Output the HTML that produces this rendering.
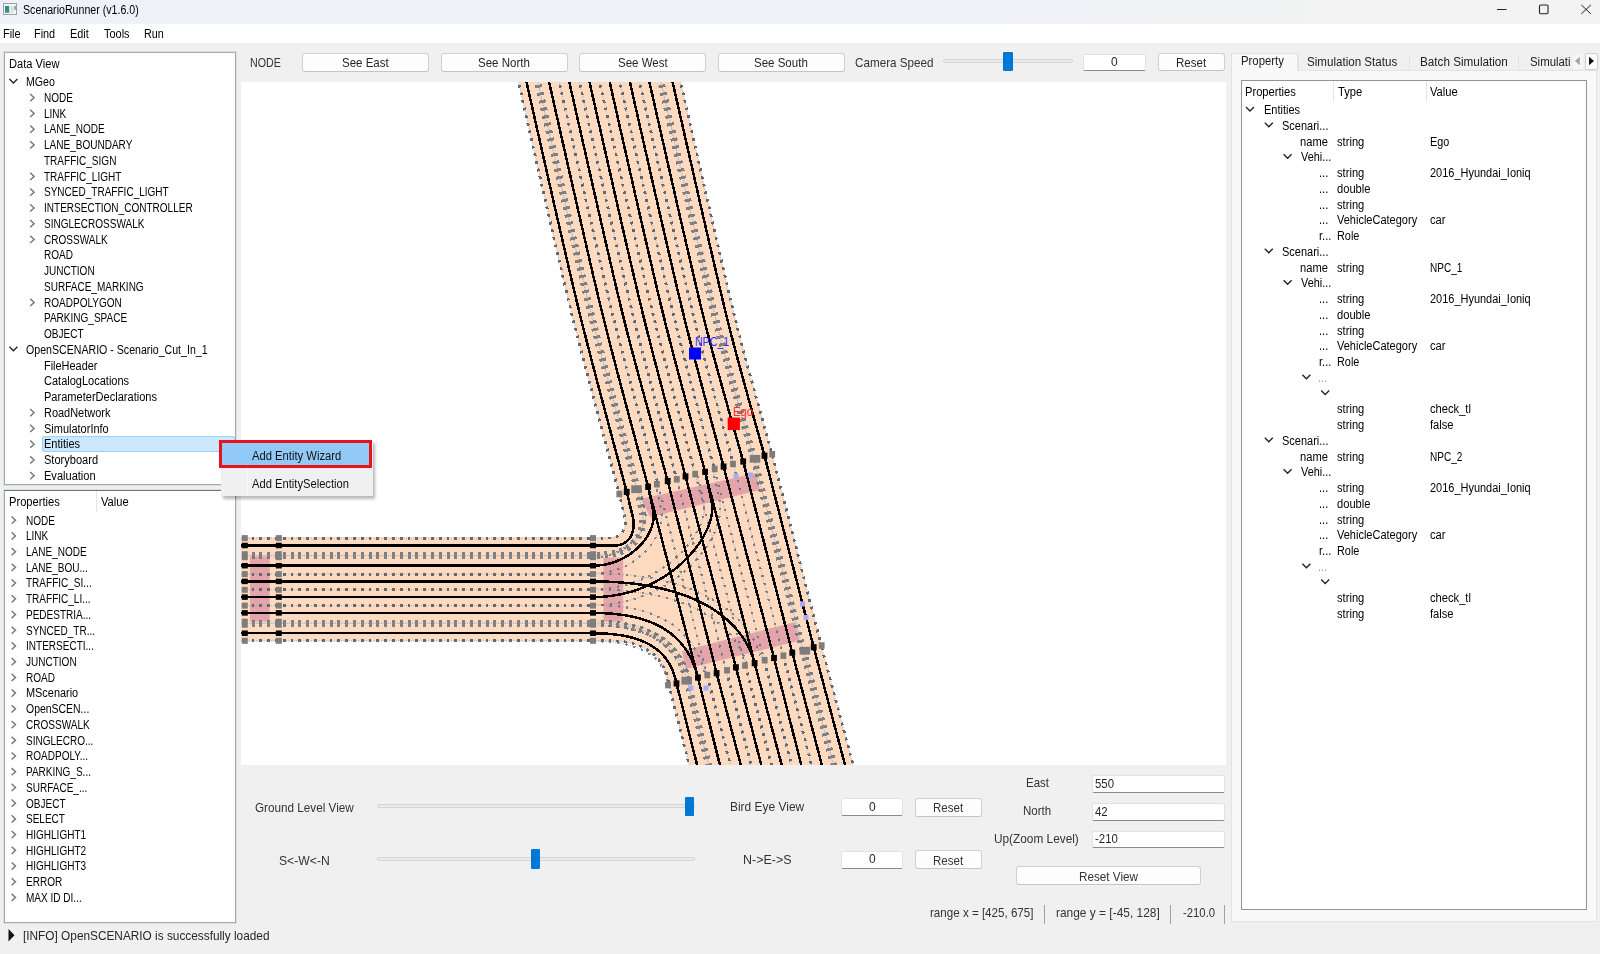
<!DOCTYPE html>
<html><head><meta charset="utf-8"><style>
html,body{margin:0;padding:0;width:1600px;height:954px;overflow:hidden;background:#f0f0f0;position:relative}
.t{position:absolute;white-space:pre;line-height:1;font-family:"Liberation Sans",sans-serif;transform-origin:0 0}
</style></head><body>
<div style="position:absolute;left:0px;top:0px;width:1600px;height:24px;background:linear-gradient(90deg,#eef1f7 0%,#eef1f8 60%,#f1f2f4 74%,#f3f3f3 85%,#f3f3f3 100%)"></div><svg style="position:absolute;left:0;top:0" width="24" height="20">
<rect x="3.5" y="3.5" width="13" height="11" fill="#f4f5f6" stroke="#9aa0a6" stroke-width="1"/>
<defs><linearGradient id="ig" x1="0" y1="0" x2="1" y2="1"><stop offset="0" stop-color="#3f6fb0"/><stop offset="1" stop-color="#3aaa5a"/></linearGradient></defs>
<rect x="5" y="6" width="4.3" height="6.8" fill="url(#ig)"/>
<rect x="10.8" y="6" width="2.6" height="6.8" fill="#dcdcdc"/>
<rect x="14" y="6" width="2" height="3.8" fill="#7ab6a0"/>
</svg><svg style="position:absolute;left:1480px;top:0" width="120" height="24">
<line x1="17" y1="9.5" x2="26.5" y2="9.5" stroke="#222" stroke-width="1"/>
<rect x="59.5" y="5" width="8.5" height="8.7" rx="1.2" fill="none" stroke="#222" stroke-width="1.1"/>
<path d="M101.3 4.9 L110.9 13.9 M110.9 4.9 L101.3 13.9" stroke="#222" stroke-width="1"/>
</svg><div style="position:absolute;left:0px;top:24px;width:1600px;height:19px;background:#ffffff"></div><div style="position:absolute;left:4px;top:52px;width:232px;height:433px;background:#fff;border:1px solid #a7aab0;box-sizing:border-box;box-shadow:0 0 0 1px #dcdde0"></div><div style="position:absolute;left:41.8px;top:435.65px;width:193px;height:16px;background:#cce8ff;border:1px solid #99d1ff;border-radius:2px;box-sizing:border-box"></div><div style="position:absolute;left:4px;top:490px;width:232px;height:433px;background:#fff;border:1px solid #a7aab0;border-top-color:#6d7580;box-sizing:border-box;box-shadow:0 0 0 1px #dcdde0"></div><div style="position:absolute;left:96px;top:491px;width:1px;height:20.5px;background:#e6e6e6"></div><svg style="position:absolute;left:0;top:920" width="20" height="30"><path d="M8.5 9 L14.5 15.3 L8.5 21.6 Z" fill="#111"/></svg><div style="position:absolute;left:302px;top:53.4px;width:127px;height:18.2px;background:#fdfdfd;border:1px solid #d0d0d0;border-bottom-color:#c4c4c4;border-radius:3px;box-sizing:border-box"></div><div style="position:absolute;left:440.5px;top:53.4px;width:127px;height:18.2px;background:#fdfdfd;border:1px solid #d0d0d0;border-bottom-color:#c4c4c4;border-radius:3px;box-sizing:border-box"></div><div style="position:absolute;left:579px;top:53.4px;width:127px;height:18.2px;background:#fdfdfd;border:1px solid #d0d0d0;border-bottom-color:#c4c4c4;border-radius:3px;box-sizing:border-box"></div><div style="position:absolute;left:717.5px;top:53.4px;width:127px;height:18.2px;background:#fdfdfd;border:1px solid #d0d0d0;border-bottom-color:#c4c4c4;border-radius:3px;box-sizing:border-box"></div><div style="position:absolute;left:943px;top:59.2px;width:130px;height:4px;background:#e7eaea;border:1px solid #d6d6d6;border-radius:2px;box-sizing:border-box"></div><div style="position:absolute;left:1003.3px;top:51.8px;width:9.5px;height:19px;background:#0078d7;border-radius:1px"></div><div style="position:absolute;left:1083px;top:53.8px;width:63px;height:17px;background:#fff;border:1px solid #e2e2e2;border-bottom:1.5px solid #8a8a8a;border-radius:2px;box-sizing:border-box"></div><div style="position:absolute;left:1157.7px;top:53.4px;width:67px;height:18px;background:#fdfdfd;border:1px solid #d0d0d0;border-bottom-color:#c4c4c4;border-radius:3px;box-sizing:border-box"></div><div style="position:absolute;left:241px;top:81.5px;width:985px;height:683.5px;background:#fff"></div><svg style="position:absolute;left:241px;top:81.5px" width="985" height="683.5" viewBox="0 0 985 683.5">
<defs><clipPath id="mc"><rect x="0" y="0" width="985" height="683.5"/></clipPath></defs><g clip-path="url(#mc)">
<rect x="0" y="0" width="985" height="683.5" fill="#fff"/>
<path d="M275.30 -9.50 L275.32 -9.42 L275.25 -9.74 L275.11 -10.36 L274.93 -11.17 L274.72 -12.08 L274.52 -12.99 L274.34 -13.78 L274.21 -14.38 L274.14 -14.66 L274.18 -14.53 L274.32 -13.89 L274.61 -12.64 L275.06 -10.68 L275.69 -7.90 L276.53 -4.21 L277.60 0.50 L278.94 6.42 L280.56 13.56 L282.42 21.79 L284.49 30.95 L286.74 40.89 L289.12 51.46 L291.62 62.50 L294.19 73.88 L296.81 85.42 L299.43 96.99 L302.03 108.44 L304.57 119.61 L307.03 130.35 L309.35 140.51 L311.52 149.95 L313.50 158.50 L315.30 166.25 L316.96 173.42 L318.51 180.11 L319.96 186.37 L321.34 192.31 L322.66 197.99 L323.95 203.50 L325.23 208.91 L326.52 214.31 L327.84 219.78 L329.20 225.40 L330.64 231.25 L332.17 237.40 L333.81 243.94 L335.58 250.94 L337.50 258.50 L339.64 266.83 L342.02 276.00 L344.61 285.87 L347.35 296.28 L350.22 307.10 L353.16 318.16 L356.13 329.33 L359.10 340.45 L362.02 351.37 L364.86 361.96 L367.56 372.04 L370.10 381.49 L372.42 390.15 L374.49 397.87 L376.26 404.50 L377.70 409.90 L427.50 601.40 L448.00 682.50 L449.52 688.50 L613.50 688.50 L611.90 682.50 L580.70 565.20 L531.50 373.70 L530.37 369.64 L529.00 364.71 L527.40 359.01 L525.61 352.64 L523.66 345.70 L521.58 338.27 L519.39 330.46 L517.12 322.35 L514.81 314.05 L512.48 305.65 L510.17 297.24 L507.89 288.93 L505.68 280.80 L503.56 272.96 L501.58 265.49 L499.75 258.50 L498.06 251.94 L496.46 245.67 L494.94 239.64 L493.49 233.79 L492.08 228.07 L490.71 222.44 L489.36 216.82 L488.02 211.18 L486.67 205.45 L485.29 199.58 L483.88 193.52 L482.42 187.22 L480.89 180.62 L479.27 173.67 L477.57 166.32 L475.75 158.50 L473.77 149.95 L471.59 140.51 L469.25 130.35 L466.79 119.61 L464.24 108.44 L461.63 96.99 L459.00 85.42 L456.37 73.88 L453.78 62.50 L451.28 51.46 L448.88 40.89 L446.62 30.95 L444.54 21.79 L442.67 13.56 L441.05 6.42 L439.70 0.50 L438.63 -4.21 L437.78 -7.90 L437.15 -10.68 L436.70 -12.64 L436.41 -13.89 L436.26 -14.53 L436.23 -14.66 L436.30 -14.38 L436.43 -13.78 L436.61 -12.99 L436.82 -12.08 L437.02 -11.17 L437.21 -10.36 L437.35 -9.74 L437.42 -9.42 L437.40 -9.50 Z" fill="#fddac0"/>
<rect x="-5" y="455.29999999999995" width="424" height="104.0" fill="#fddac0"/>
<path d="M377.70 409.90 L383.50 433.50 L383.78 434.87 L384.01 436.24 L384.17 437.59 L384.26 438.93 L384.28 440.25 L384.23 441.55 L384.10 442.81 L383.89 444.04 L383.60 445.23 L383.22 446.38 L382.75 447.48 L382.19 448.52 L381.53 449.51 L380.77 450.44 L379.91 451.30 L378.94 452.09 L377.87 452.81 L376.68 453.44 L375.38 453.99 L373.95 454.45 L372.41 454.81 L370.73 455.08 L368.93 455.24 L367.00 455.30 L359.00 455.30 L359.00 478.50 L419.00 478.50 Z" fill="#fddac0"/>
<path d="M371.00 559.30 L375.41 559.42 L379.65 559.74 L383.70 560.23 L387.59 560.91 L391.29 561.77 L394.82 562.80 L398.17 563.99 L401.35 565.35 L404.35 566.86 L407.18 568.52 L409.83 570.33 L412.31 572.29 L414.62 574.38 L416.75 576.60 L418.70 578.95 L420.48 581.42 L422.09 584.01 L423.52 586.71 L424.78 589.52 L425.87 592.43 L426.79 595.44 L427.53 598.54 L428.10 601.73 L428.50 605.00 L435.00 630.50 L459.00 630.50 L459.00 538.50 L371.00 538.50 Z" fill="#fddac0"/>
<path d="M400.00 417.00 L515.50 391.00 L519.00 408.00 L409.00 435.00 Z" fill="#e4a4aa"/>
<path d="M441.00 569.10 L554.00 539.90 L558.50 558.80 L444.50 587.00 Z" fill="#e4a4aa"/>
<rect x="9" y="474.5" width="19.7" height="65" fill="#e4a4aa"/>
<rect x="362.4" y="475.5" width="19.7" height="64" fill="#e4a4aa"/>
<path d="M275.30 -9.50 L275.32 -9.42 L275.25 -9.74 L275.11 -10.36 L274.93 -11.17 L274.72 -12.08 L274.52 -12.99 L274.34 -13.78 L274.21 -14.38 L274.14 -14.66 L274.18 -14.53 L274.32 -13.89 L274.61 -12.64 L275.06 -10.68 L275.69 -7.90 L276.53 -4.21 L277.60 0.50 L278.94 6.42 L280.56 13.56 L282.42 21.79 L284.49 30.95 L286.74 40.89 L289.12 51.46 L291.62 62.50 L294.19 73.88 L296.81 85.42 L299.43 96.99 L302.03 108.44 L304.57 119.61 L307.03 130.35 L309.35 140.51 L311.52 149.95 L313.50 158.50 L315.30 166.25 L316.96 173.42 L318.51 180.11 L319.96 186.37 L321.34 192.31 L322.66 197.99 L323.95 203.50 L325.23 208.91 L326.52 214.31 L327.84 219.78 L329.20 225.40 L330.64 231.25 L332.17 237.40 L333.81 243.94 L335.58 250.94 L337.50 258.50 L339.64 266.83 L342.02 276.00 L344.61 285.87 L347.35 296.28 L350.22 307.10 L353.16 318.16 L356.13 329.33 L359.10 340.45 L362.02 351.37 L364.86 361.96 L367.56 372.04 L370.10 381.49 L372.42 390.15 L374.49 397.87 L376.26 404.50 L377.70 409.90" fill="none" stroke="#9aa0a6" stroke-width="0.8" stroke-dasharray="1 1.5"/>
<path d="M275.30 -9.50 L275.32 -9.42 L275.25 -9.74 L275.11 -10.36 L274.93 -11.17 L274.72 -12.08 L274.52 -12.99 L274.34 -13.78 L274.21 -14.38 L274.14 -14.66 L274.18 -14.53 L274.32 -13.89 L274.61 -12.64 L275.06 -10.68 L275.69 -7.90 L276.53 -4.21 L277.60 0.50 L278.94 6.42 L280.56 13.56 L282.42 21.79 L284.49 30.95 L286.74 40.89 L289.12 51.46 L291.62 62.50 L294.19 73.88 L296.81 85.42 L299.43 96.99 L302.03 108.44 L304.57 119.61 L307.03 130.35 L309.35 140.51 L311.52 149.95 L313.50 158.50 L315.30 166.25 L316.96 173.42 L318.51 180.11 L319.96 186.37 L321.34 192.31 L322.66 197.99 L323.95 203.50 L325.23 208.91 L326.52 214.31 L327.84 219.78 L329.20 225.40 L330.64 231.25 L332.17 237.40 L333.81 243.94 L335.58 250.94 L337.50 258.50 L339.64 266.83 L342.02 276.00 L344.61 285.87 L347.35 296.28 L350.22 307.10 L353.16 318.16 L356.13 329.33 L359.10 340.45 L362.02 351.37 L364.86 361.96 L367.56 372.04 L370.10 381.49 L372.42 390.15 L374.49 397.87 L376.26 404.50 L377.70 409.90" fill="none" stroke="#5d6a76" stroke-width="2.8" stroke-dasharray="2.8 5" opacity="1.0" shape-rendering="crispEdges"/>
<path d="M437.40 -9.50 L437.42 -9.42 L437.35 -9.74 L437.21 -10.36 L437.02 -11.17 L436.82 -12.08 L436.61 -12.99 L436.43 -13.78 L436.30 -14.38 L436.23 -14.66 L436.26 -14.53 L436.41 -13.89 L436.70 -12.64 L437.15 -10.68 L437.78 -7.90 L438.63 -4.21 L439.70 0.50 L441.05 6.42 L442.67 13.56 L444.54 21.79 L446.62 30.95 L448.88 40.89 L451.28 51.46 L453.78 62.50 L456.37 73.88 L459.00 85.42 L461.63 96.99 L464.24 108.44 L466.79 119.61 L469.25 130.35 L471.59 140.51 L473.77 149.95 L475.75 158.50 L477.57 166.32 L479.27 173.67 L480.89 180.62 L482.42 187.22 L483.88 193.52 L485.29 199.58 L486.67 205.45 L488.02 211.18 L489.36 216.82 L490.71 222.44 L492.08 228.07 L493.49 233.79 L494.94 239.64 L496.46 245.67 L498.06 251.94 L499.75 258.50 L501.58 265.49 L503.56 272.96 L505.68 280.80 L507.89 288.93 L510.17 297.24 L512.48 305.65 L514.81 314.05 L517.12 322.35 L519.39 330.46 L521.58 338.27 L523.66 345.70 L525.61 352.64 L527.40 359.01 L529.00 364.71 L530.37 369.64 L531.50 373.70" fill="none" stroke="#9aa0a6" stroke-width="0.8" stroke-dasharray="1 1.5"/>
<path d="M437.40 -9.50 L437.42 -9.42 L437.35 -9.74 L437.21 -10.36 L437.02 -11.17 L436.82 -12.08 L436.61 -12.99 L436.43 -13.78 L436.30 -14.38 L436.23 -14.66 L436.26 -14.53 L436.41 -13.89 L436.70 -12.64 L437.15 -10.68 L437.78 -7.90 L438.63 -4.21 L439.70 0.50 L441.05 6.42 L442.67 13.56 L444.54 21.79 L446.62 30.95 L448.88 40.89 L451.28 51.46 L453.78 62.50 L456.37 73.88 L459.00 85.42 L461.63 96.99 L464.24 108.44 L466.79 119.61 L469.25 130.35 L471.59 140.51 L473.77 149.95 L475.75 158.50 L477.57 166.32 L479.27 173.67 L480.89 180.62 L482.42 187.22 L483.88 193.52 L485.29 199.58 L486.67 205.45 L488.02 211.18 L489.36 216.82 L490.71 222.44 L492.08 228.07 L493.49 233.79 L494.94 239.64 L496.46 245.67 L498.06 251.94 L499.75 258.50 L501.58 265.49 L503.56 272.96 L505.68 280.80 L507.89 288.93 L510.17 297.24 L512.48 305.65 L514.81 314.05 L517.12 322.35 L519.39 330.46 L521.58 338.27 L523.66 345.70 L525.61 352.64 L527.40 359.01 L529.00 364.71 L530.37 369.64 L531.50 373.70" fill="none" stroke="#5d6a76" stroke-width="2.8" stroke-dasharray="2.8 5" opacity="1.0" shape-rendering="crispEdges"/>
<path d="M316.00 -9.50 L316.02 -9.42 L315.95 -9.74 L315.81 -10.36 L315.62 -11.17 L315.42 -12.08 L315.22 -12.99 L315.04 -13.78 L314.90 -14.38 L314.84 -14.66 L314.87 -14.53 L315.02 -13.89 L315.31 -12.64 L315.75 -10.68 L316.39 -7.90 L317.23 -4.21 L318.30 0.50 L319.64 6.42 L321.26 13.56 L323.13 21.79 L325.20 30.95 L327.45 40.89 L329.84 51.46 L332.34 62.50 L334.91 73.88 L337.53 85.42 L340.15 96.99 L342.76 108.44 L345.30 119.61 L347.75 130.35 L350.08 140.51 L352.25 149.95 L354.23 158.50 L356.03 166.26 L357.70 173.48 L359.26 180.22 L360.73 186.56 L362.12 192.58 L363.46 198.34 L364.77 203.93 L366.06 209.41 L367.36 214.87 L368.68 220.37 L370.05 225.99 L371.48 231.81 L373.00 237.89 L374.61 244.32 L376.35 251.16 L378.23 258.50 L380.32 266.53 L382.63 275.33 L385.13 284.75 L387.78 294.66 L390.53 304.92 L393.36 315.40 L396.22 325.95 L399.07 336.45 L401.87 346.75 L404.59 356.72 L407.18 366.22 L409.61 375.12 L411.83 383.27 L413.82 390.54 L415.52 396.80 L416.90 401.90" fill="none" stroke="#9aa0a6" stroke-width="0.8" stroke-dasharray="1 1.5"/>
<path d="M316.00 -9.50 L316.02 -9.42 L315.95 -9.74 L315.81 -10.36 L315.62 -11.17 L315.42 -12.08 L315.22 -12.99 L315.04 -13.78 L314.90 -14.38 L314.84 -14.66 L314.87 -14.53 L315.02 -13.89 L315.31 -12.64 L315.75 -10.68 L316.39 -7.90 L317.23 -4.21 L318.30 0.50 L319.64 6.42 L321.26 13.56 L323.13 21.79 L325.20 30.95 L327.45 40.89 L329.84 51.46 L332.34 62.50 L334.91 73.88 L337.53 85.42 L340.15 96.99 L342.76 108.44 L345.30 119.61 L347.75 130.35 L350.08 140.51 L352.25 149.95 L354.23 158.50 L356.03 166.26 L357.70 173.48 L359.26 180.22 L360.73 186.56 L362.12 192.58 L363.46 198.34 L364.77 203.93 L366.06 209.41 L367.36 214.87 L368.68 220.37 L370.05 225.99 L371.48 231.81 L373.00 237.89 L374.61 244.32 L376.35 251.16 L378.23 258.50 L380.32 266.53 L382.63 275.33 L385.13 284.75 L387.78 294.66 L390.53 304.92 L393.36 315.40 L396.22 325.95 L399.07 336.45 L401.87 346.75 L404.59 356.72 L407.18 366.22 L409.61 375.12 L411.83 383.27 L413.82 390.54 L415.52 396.80 L416.90 401.90" fill="none" stroke="#5d6a76" stroke-width="2.8" stroke-dasharray="2.8 5" opacity="1.0" shape-rendering="crispEdges"/>
<path d="M336.20 -9.50 L336.22 -9.42 L336.15 -9.74 L336.01 -10.36 L335.82 -11.17 L335.62 -12.08 L335.42 -12.99 L335.24 -13.78 L335.10 -14.38 L335.04 -14.66 L335.07 -14.53 L335.22 -13.89 L335.50 -12.64 L335.95 -10.68 L336.59 -7.90 L337.43 -4.21 L338.50 0.50 L339.84 6.42 L341.47 13.56 L343.33 21.79 L345.40 30.95 L347.65 40.89 L350.04 51.46 L352.54 62.50 L355.12 73.88 L357.74 85.42 L360.37 96.99 L362.97 108.44 L365.52 119.61 L367.97 130.35 L370.30 140.51 L372.47 149.95 L374.45 158.50 L376.26 166.27 L377.94 173.51 L379.51 180.29 L380.99 186.68 L382.40 192.75 L383.75 198.57 L385.07 204.21 L386.38 209.74 L387.69 215.23 L389.02 220.75 L390.38 226.38 L391.81 232.17 L393.31 238.21 L394.91 244.57 L396.62 251.31 L398.45 258.50 L400.48 266.34 L402.72 274.89 L405.14 284.02 L407.69 293.60 L410.34 303.51 L413.05 313.60 L415.80 323.76 L418.53 333.85 L421.21 343.75 L423.81 353.32 L426.29 362.44 L428.62 370.97 L430.75 378.80 L432.64 385.78 L434.27 391.79 L435.60 396.70" fill="none" stroke="#9aa0a6" stroke-width="0.8" stroke-dasharray="1 1.5"/>
<path d="M336.20 -9.50 L336.22 -9.42 L336.15 -9.74 L336.01 -10.36 L335.82 -11.17 L335.62 -12.08 L335.42 -12.99 L335.24 -13.78 L335.10 -14.38 L335.04 -14.66 L335.07 -14.53 L335.22 -13.89 L335.50 -12.64 L335.95 -10.68 L336.59 -7.90 L337.43 -4.21 L338.50 0.50 L339.84 6.42 L341.47 13.56 L343.33 21.79 L345.40 30.95 L347.65 40.89 L350.04 51.46 L352.54 62.50 L355.12 73.88 L357.74 85.42 L360.37 96.99 L362.97 108.44 L365.52 119.61 L367.97 130.35 L370.30 140.51 L372.47 149.95 L374.45 158.50 L376.26 166.27 L377.94 173.51 L379.51 180.29 L380.99 186.68 L382.40 192.75 L383.75 198.57 L385.07 204.21 L386.38 209.74 L387.69 215.23 L389.02 220.75 L390.38 226.38 L391.81 232.17 L393.31 238.21 L394.91 244.57 L396.62 251.31 L398.45 258.50 L400.48 266.34 L402.72 274.89 L405.14 284.02 L407.69 293.60 L410.34 303.51 L413.05 313.60 L415.80 323.76 L418.53 333.85 L421.21 343.75 L423.81 353.32 L426.29 362.44 L428.62 370.97 L430.75 378.80 L432.64 385.78 L434.27 391.79 L435.60 396.70" fill="none" stroke="#5d6a76" stroke-width="2.8" stroke-dasharray="2.8 5" opacity="1.0" shape-rendering="crispEdges"/>
<path d="M356.40 -9.50 L356.42 -9.42 L356.35 -9.74 L356.21 -10.36 L356.02 -11.17 L355.82 -12.08 L355.61 -12.99 L355.43 -13.78 L355.30 -14.38 L355.24 -14.66 L355.27 -14.53 L355.42 -13.89 L355.70 -12.64 L356.15 -10.68 L356.79 -7.90 L357.63 -4.21 L358.70 0.50 L360.05 6.42 L361.67 13.56 L363.53 21.79 L365.61 30.95 L367.86 40.89 L370.25 51.46 L372.75 62.50 L375.33 73.88 L377.95 85.42 L380.58 96.99 L383.19 108.44 L385.73 119.61 L388.19 130.35 L390.52 140.51 L392.69 149.95 L394.68 158.50 L396.48 166.28 L398.17 173.55 L399.75 180.36 L401.24 186.79 L402.67 192.91 L404.04 198.77 L405.38 204.46 L406.70 210.02 L408.02 215.55 L409.35 221.09 L410.72 226.72 L412.14 232.50 L413.63 238.50 L415.20 244.79 L416.88 251.43 L418.68 258.50 L420.65 266.17 L422.82 274.51 L425.14 283.38 L427.60 292.67 L430.15 302.25 L432.75 312.01 L435.37 321.82 L437.99 331.55 L440.55 341.09 L443.04 350.31 L445.41 359.09 L447.63 367.31 L449.66 374.84 L451.47 381.56 L453.03 387.36 L454.30 392.10" fill="none" stroke="#e8a070" stroke-width="0.8" stroke-dasharray="1 1.5"/>
<path d="M356.40 -9.50 L356.42 -9.42 L356.35 -9.74 L356.21 -10.36 L356.02 -11.17 L355.82 -12.08 L355.61 -12.99 L355.43 -13.78 L355.30 -14.38 L355.24 -14.66 L355.27 -14.53 L355.42 -13.89 L355.70 -12.64 L356.15 -10.68 L356.79 -7.90 L357.63 -4.21 L358.70 0.50 L360.05 6.42 L361.67 13.56 L363.53 21.79 L365.61 30.95 L367.86 40.89 L370.25 51.46 L372.75 62.50 L375.33 73.88 L377.95 85.42 L380.58 96.99 L383.19 108.44 L385.73 119.61 L388.19 130.35 L390.52 140.51 L392.69 149.95 L394.68 158.50 L396.48 166.28 L398.17 173.55 L399.75 180.36 L401.24 186.79 L402.67 192.91 L404.04 198.77 L405.38 204.46 L406.70 210.02 L408.02 215.55 L409.35 221.09 L410.72 226.72 L412.14 232.50 L413.63 238.50 L415.20 244.79 L416.88 251.43 L418.68 258.50 L420.65 266.17 L422.82 274.51 L425.14 283.38 L427.60 292.67 L430.15 302.25 L432.75 312.01 L435.37 321.82 L437.99 331.55 L440.55 341.09 L443.04 350.31 L445.41 359.09 L447.63 367.31 L449.66 374.84 L451.47 381.56 L453.03 387.36 L454.30 392.10" fill="none" stroke="#5d6a76" stroke-width="2.8" stroke-dasharray="2.8 5" opacity="1.0" shape-rendering="crispEdges"/>
<path d="M376.60 -9.50 L376.62 -9.42 L376.55 -9.74 L376.41 -10.36 L376.22 -11.17 L376.02 -12.08 L375.81 -12.99 L375.63 -13.78 L375.50 -14.38 L375.44 -14.66 L375.47 -14.53 L375.62 -13.89 L375.90 -12.64 L376.35 -10.68 L376.98 -7.90 L377.83 -4.21 L378.90 0.50 L380.25 6.42 L381.87 13.56 L383.74 21.79 L385.81 30.95 L388.06 40.89 L390.46 51.46 L392.96 62.50 L395.54 73.88 L398.16 85.42 L400.80 96.99 L403.40 108.44 L405.95 119.61 L408.41 130.35 L410.74 140.51 L412.91 149.95 L414.90 158.50 L416.71 166.29 L418.40 173.58 L419.99 180.43 L421.49 186.91 L422.93 193.07 L424.31 198.99 L425.66 204.72 L426.99 210.33 L428.32 215.89 L429.66 221.45 L431.03 227.08 L432.44 232.84 L433.92 238.80 L435.48 245.02 L437.13 251.57 L438.90 258.50 L440.83 265.99 L442.94 274.09 L445.20 282.69 L447.58 291.67 L450.05 300.92 L452.56 310.32 L455.10 319.75 L457.62 329.10 L460.10 338.26 L462.49 347.10 L464.78 355.52 L466.91 363.40 L468.87 370.62 L470.62 377.07 L472.12 382.64 L473.35 387.20" fill="none" stroke="#9aa0a6" stroke-width="0.8" stroke-dasharray="1 1.5"/>
<path d="M376.60 -9.50 L376.62 -9.42 L376.55 -9.74 L376.41 -10.36 L376.22 -11.17 L376.02 -12.08 L375.81 -12.99 L375.63 -13.78 L375.50 -14.38 L375.44 -14.66 L375.47 -14.53 L375.62 -13.89 L375.90 -12.64 L376.35 -10.68 L376.98 -7.90 L377.83 -4.21 L378.90 0.50 L380.25 6.42 L381.87 13.56 L383.74 21.79 L385.81 30.95 L388.06 40.89 L390.46 51.46 L392.96 62.50 L395.54 73.88 L398.16 85.42 L400.80 96.99 L403.40 108.44 L405.95 119.61 L408.41 130.35 L410.74 140.51 L412.91 149.95 L414.90 158.50 L416.71 166.29 L418.40 173.58 L419.99 180.43 L421.49 186.91 L422.93 193.07 L424.31 198.99 L425.66 204.72 L426.99 210.33 L428.32 215.89 L429.66 221.45 L431.03 227.08 L432.44 232.84 L433.92 238.80 L435.48 245.02 L437.13 251.57 L438.90 258.50 L440.83 265.99 L442.94 274.09 L445.20 282.69 L447.58 291.67 L450.05 300.92 L452.56 310.32 L455.10 319.75 L457.62 329.10 L460.10 338.26 L462.49 347.10 L464.78 355.52 L466.91 363.40 L468.87 370.62 L470.62 377.07 L472.12 382.64 L473.35 387.20" fill="none" stroke="#5d6a76" stroke-width="2.8" stroke-dasharray="2.8 5" opacity="1.0" shape-rendering="crispEdges"/>
<path d="M396.45 -9.50 L396.47 -9.42 L396.40 -9.74 L396.26 -10.36 L396.07 -11.17 L395.87 -12.08 L395.66 -12.99 L395.48 -13.78 L395.35 -14.38 L395.29 -14.66 L395.32 -14.53 L395.46 -13.89 L395.75 -12.64 L396.20 -10.68 L396.83 -7.90 L397.68 -4.21 L398.75 0.50 L400.10 6.42 L401.72 13.56 L403.59 21.79 L405.67 30.95 L407.92 40.89 L410.31 51.46 L412.82 62.50 L415.40 73.88 L418.03 85.42 L420.66 96.99 L423.27 108.44 L425.82 119.61 L428.28 130.35 L430.61 140.51 L432.78 149.95 L434.77 158.50 L436.58 166.30 L438.28 173.61 L439.87 180.50 L441.39 187.03 L442.83 193.24 L444.22 199.21 L445.58 205.00 L446.92 210.65 L448.25 216.24 L449.59 221.82 L450.96 227.46 L452.37 233.20 L453.84 239.12 L455.39 245.27 L457.02 251.71 L458.77 258.50 L460.67 265.80 L462.74 273.66 L464.96 281.97 L467.29 290.63 L469.69 299.52 L472.15 308.54 L474.62 317.57 L477.08 326.52 L479.49 335.28 L481.83 343.73 L484.05 351.77 L486.13 359.30 L488.04 366.19 L489.74 372.36 L491.20 377.68 L492.40 382.05" fill="none" stroke="#9aa0a6" stroke-width="0.8" stroke-dasharray="1 1.5"/>
<path d="M396.45 -9.50 L396.47 -9.42 L396.40 -9.74 L396.26 -10.36 L396.07 -11.17 L395.87 -12.08 L395.66 -12.99 L395.48 -13.78 L395.35 -14.38 L395.29 -14.66 L395.32 -14.53 L395.46 -13.89 L395.75 -12.64 L396.20 -10.68 L396.83 -7.90 L397.68 -4.21 L398.75 0.50 L400.10 6.42 L401.72 13.56 L403.59 21.79 L405.67 30.95 L407.92 40.89 L410.31 51.46 L412.82 62.50 L415.40 73.88 L418.03 85.42 L420.66 96.99 L423.27 108.44 L425.82 119.61 L428.28 130.35 L430.61 140.51 L432.78 149.95 L434.77 158.50 L436.58 166.30 L438.28 173.61 L439.87 180.50 L441.39 187.03 L442.83 193.24 L444.22 199.21 L445.58 205.00 L446.92 210.65 L448.25 216.24 L449.59 221.82 L450.96 227.46 L452.37 233.20 L453.84 239.12 L455.39 245.27 L457.02 251.71 L458.77 258.50 L460.67 265.80 L462.74 273.66 L464.96 281.97 L467.29 290.63 L469.69 299.52 L472.15 308.54 L474.62 317.57 L477.08 326.52 L479.49 335.28 L481.83 343.73 L484.05 351.77 L486.13 359.30 L488.04 366.19 L489.74 372.36 L491.20 377.68 L492.40 382.05" fill="none" stroke="#5d6a76" stroke-width="2.8" stroke-dasharray="2.8 5" opacity="1.0" shape-rendering="crispEdges"/>
<path d="M294.60 -9.50 L294.62 -9.42 L294.55 -9.74 L294.41 -10.36 L294.23 -11.17 L294.02 -12.08 L293.82 -12.99 L293.64 -13.78 L293.51 -14.38 L293.44 -14.66 L293.47 -14.53 L293.62 -13.89 L293.91 -12.64 L294.36 -10.68 L294.99 -7.90 L295.83 -4.21 L296.90 0.50 L298.24 6.42 L299.86 13.56 L301.72 21.79 L303.79 30.95 L306.04 40.89 L308.43 51.46 L310.93 62.50 L313.50 73.88 L316.12 85.42 L318.74 96.99 L321.34 108.44 L323.88 119.61 L326.34 130.35 L328.66 140.51 L330.83 149.95 L332.81 158.50 L334.61 166.25 L336.28 173.44 L337.83 180.14 L339.28 186.43 L340.67 192.39 L342.00 198.10 L343.30 203.63 L344.58 209.07 L345.87 214.49 L347.19 219.97 L348.56 225.59 L349.99 231.42 L351.52 237.56 L353.15 244.06 L354.91 251.01 L356.81 258.50 L358.93 266.73 L361.28 275.79 L363.84 285.51 L366.54 295.77 L369.36 306.40 L372.26 317.28 L375.18 328.25 L378.11 339.17 L380.98 349.90 L383.77 360.29 L386.43 370.19 L388.92 379.46 L391.20 387.96 L393.24 395.53 L394.98 402.05 L396.40 407.35" fill="none" stroke="#6a7681" stroke-width="7" stroke-dasharray="3 4.8" opacity="0.9" shape-rendering="crispEdges"/>
<path d="M294.60 -9.50 L294.62 -9.42 L294.55 -9.74 L294.41 -10.36 L294.23 -11.17 L294.02 -12.08 L293.82 -12.99 L293.64 -13.78 L293.51 -14.38 L293.44 -14.66 L293.47 -14.53 L293.62 -13.89 L293.91 -12.64 L294.36 -10.68 L294.99 -7.90 L295.83 -4.21 L296.90 0.50 L298.24 6.42 L299.86 13.56 L301.72 21.79 L303.79 30.95 L306.04 40.89 L308.43 51.46 L310.93 62.50 L313.50 73.88 L316.12 85.42 L318.74 96.99 L321.34 108.44 L323.88 119.61 L326.34 130.35 L328.66 140.51 L330.83 149.95 L332.81 158.50 L334.61 166.25 L336.28 173.44 L337.83 180.14 L339.28 186.43 L340.67 192.39 L342.00 198.10 L343.30 203.63 L344.58 209.07 L345.87 214.49 L347.19 219.97 L348.56 225.59 L349.99 231.42 L351.52 237.56 L353.15 244.06 L354.91 251.01 L356.81 258.50 L358.93 266.73 L361.28 275.79 L363.84 285.51 L366.54 295.77 L369.36 306.40 L372.26 317.28 L375.18 328.25 L378.11 339.17 L380.98 349.90 L383.77 360.29 L386.43 370.19 L388.92 379.46 L391.20 387.96 L393.24 395.53 L394.98 402.05 L396.40 407.35" fill="none" stroke="#8a9096" stroke-width="0.9" stroke-dasharray="1 1.2"/>
<path d="M417.80 -9.50 L417.82 -9.42 L417.75 -9.74 L417.61 -10.36 L417.42 -11.17 L417.22 -12.08 L417.01 -12.99 L416.83 -13.78 L416.70 -14.38 L416.63 -14.66 L416.67 -14.53 L416.81 -13.89 L417.10 -12.64 L417.55 -10.68 L418.18 -7.90 L419.03 -4.21 L420.10 0.50 L421.45 6.42 L423.07 13.56 L424.94 21.79 L427.02 30.95 L429.27 40.89 L431.67 51.46 L434.18 62.50 L436.76 73.88 L439.39 85.42 L442.02 96.99 L444.63 108.44 L447.18 119.61 L449.64 130.35 L451.98 140.51 L454.15 149.95 L456.14 158.50 L457.95 166.31 L459.65 173.65 L461.26 180.58 L462.78 187.15 L464.23 193.43 L465.64 199.45 L467.00 205.29 L468.35 210.99 L469.68 216.62 L471.03 222.22 L472.40 227.86 L473.81 233.59 L475.27 239.46 L476.80 245.53 L478.42 251.86 L480.14 258.50 L482.00 265.60 L484.03 273.20 L486.20 281.21 L488.47 289.52 L490.82 298.03 L493.20 306.65 L495.61 315.27 L497.99 323.80 L500.33 332.13 L502.60 340.17 L504.75 347.81 L506.77 354.95 L508.62 361.51 L510.27 367.37 L511.69 372.43 L512.85 376.60" fill="none" stroke="#6a7681" stroke-width="7" stroke-dasharray="3 4.8" opacity="0.9" shape-rendering="crispEdges"/>
<path d="M417.80 -9.50 L417.82 -9.42 L417.75 -9.74 L417.61 -10.36 L417.42 -11.17 L417.22 -12.08 L417.01 -12.99 L416.83 -13.78 L416.70 -14.38 L416.63 -14.66 L416.67 -14.53 L416.81 -13.89 L417.10 -12.64 L417.55 -10.68 L418.18 -7.90 L419.03 -4.21 L420.10 0.50 L421.45 6.42 L423.07 13.56 L424.94 21.79 L427.02 30.95 L429.27 40.89 L431.67 51.46 L434.18 62.50 L436.76 73.88 L439.39 85.42 L442.02 96.99 L444.63 108.44 L447.18 119.61 L449.64 130.35 L451.98 140.51 L454.15 149.95 L456.14 158.50 L457.95 166.31 L459.65 173.65 L461.26 180.58 L462.78 187.15 L464.23 193.43 L465.64 199.45 L467.00 205.29 L468.35 210.99 L469.68 216.62 L471.03 222.22 L472.40 227.86 L473.81 233.59 L475.27 239.46 L476.80 245.53 L478.42 251.86 L480.14 258.50 L482.00 265.60 L484.03 273.20 L486.20 281.21 L488.47 289.52 L490.82 298.03 L493.20 306.65 L495.61 315.27 L497.99 323.80 L500.33 332.13 L502.60 340.17 L504.75 347.81 L506.77 354.95 L508.62 361.51 L510.27 367.37 L511.69 372.43 L512.85 376.60" fill="none" stroke="#8a9096" stroke-width="0.9" stroke-dasharray="1 1.2"/>
<path d="M427.50 601.40 L448.00 682.50 L449.52 688.50" fill="none" stroke="#9aa0a6" stroke-width="0.8" stroke-dasharray="1 1.5"/>
<path d="M427.50 601.40 L448.00 682.50 L449.52 688.50" fill="none" stroke="#5d6a76" stroke-width="2.8" stroke-dasharray="2.8 5" opacity="1.0" shape-rendering="crispEdges"/>
<path d="M580.70 565.20 L611.90 682.50 L613.50 688.50" fill="none" stroke="#9aa0a6" stroke-width="0.8" stroke-dasharray="1 1.5"/>
<path d="M580.70 565.20 L611.90 682.50 L613.50 688.50" fill="none" stroke="#5d6a76" stroke-width="2.8" stroke-dasharray="2.8 5" opacity="1.0" shape-rendering="crispEdges"/>
<path d="M466.25 593.35 L489.25 682.50 L490.80 688.50" fill="none" stroke="#9aa0a6" stroke-width="0.8" stroke-dasharray="1 1.5"/>
<path d="M466.25 593.35 L489.25 682.50 L490.80 688.50" fill="none" stroke="#5d6a76" stroke-width="2.8" stroke-dasharray="2.8 5" opacity="1.0" shape-rendering="crispEdges"/>
<path d="M485.25 588.25 L509.95 682.50 L511.52 688.50" fill="none" stroke="#9aa0a6" stroke-width="0.8" stroke-dasharray="1 1.5"/>
<path d="M485.25 588.25 L509.95 682.50 L511.52 688.50" fill="none" stroke="#5d6a76" stroke-width="2.8" stroke-dasharray="2.8 5" opacity="1.0" shape-rendering="crispEdges"/>
<path d="M504.25 583.25 L530.40 682.50 L531.98 688.50" fill="none" stroke="#e8a070" stroke-width="0.8" stroke-dasharray="1 1.5"/>
<path d="M504.25 583.25 L530.40 682.50 L531.98 688.50" fill="none" stroke="#5d6a76" stroke-width="2.8" stroke-dasharray="2.8 5" opacity="1.0" shape-rendering="crispEdges"/>
<path d="M523.30 578.60 L550.40 682.50 L551.97 688.50" fill="none" stroke="#9aa0a6" stroke-width="0.8" stroke-dasharray="1 1.5"/>
<path d="M523.30 578.60 L550.40 682.50 L551.97 688.50" fill="none" stroke="#5d6a76" stroke-width="2.8" stroke-dasharray="2.8 5" opacity="1.0" shape-rendering="crispEdges"/>
<path d="M542.15 573.35 L570.45 682.50 L572.01 688.50" fill="none" stroke="#9aa0a6" stroke-width="0.8" stroke-dasharray="1 1.5"/>
<path d="M542.15 573.35 L570.45 682.50 L572.01 688.50" fill="none" stroke="#5d6a76" stroke-width="2.8" stroke-dasharray="2.8 5" opacity="1.0" shape-rendering="crispEdges"/>
<path d="M446.20 598.45 L467.40 682.50 L468.91 688.50" fill="none" stroke="#6a7681" stroke-width="7" stroke-dasharray="3 4.8" opacity="0.9" shape-rendering="crispEdges"/>
<path d="M446.20 598.45 L467.40 682.50 L468.91 688.50" fill="none" stroke="#8a9096" stroke-width="0.9" stroke-dasharray="1 1.2"/>
<path d="M562.00 567.95 L592.30 682.50 L593.89 688.50" fill="none" stroke="#6a7681" stroke-width="7" stroke-dasharray="3 4.8" opacity="0.9" shape-rendering="crispEdges"/>
<path d="M562.00 567.95 L592.30 682.50 L593.89 688.50" fill="none" stroke="#8a9096" stroke-width="0.9" stroke-dasharray="1 1.2"/>
<path d="M531.50 373.70 L580.70 565.20" fill="none" stroke="#9aa0a6" stroke-width="0.8" stroke-dasharray="1 1.5"/>
<path d="M531.50 373.70 L580.70 565.20" fill="none" stroke="#5d6a76" stroke-width="2.8" stroke-dasharray="2.8 5" opacity="1.0" shape-rendering="crispEdges"/>
<path d="M512.85 376.60 L562.00 567.95" fill="none" stroke="#6a7681" stroke-width="7" stroke-dasharray="3 4.8" opacity="0.9" shape-rendering="crispEdges"/>
<path d="M512.85 376.60 L562.00 567.95" fill="none" stroke="#8a9096" stroke-width="0.9" stroke-dasharray="1 1.2"/>
<path d="M416.90 401.90 L466.25 593.35" fill="none" stroke="#9aa0a6" stroke-width="0.8" stroke-dasharray="1 1.5"/>
<path d="M416.90 401.90 L466.25 593.35" fill="none" stroke="#5d6a76" stroke-width="2.2" stroke-dasharray="2.2 6" opacity="0.8" shape-rendering="crispEdges"/>
<path d="M435.60 396.70 L485.25 588.25" fill="none" stroke="#9aa0a6" stroke-width="0.8" stroke-dasharray="1 1.5"/>
<path d="M435.60 396.70 L485.25 588.25" fill="none" stroke="#5d6a76" stroke-width="2.2" stroke-dasharray="2.2 6" opacity="0.8" shape-rendering="crispEdges"/>
<path d="M454.30 392.10 L504.25 583.25" fill="none" stroke="#9aa0a6" stroke-width="0.8" stroke-dasharray="1 1.5"/>
<path d="M454.30 392.10 L504.25 583.25" fill="none" stroke="#5d6a76" stroke-width="2.2" stroke-dasharray="2.2 6" opacity="0.8" shape-rendering="crispEdges"/>
<path d="M473.35 387.20 L523.30 578.60" fill="none" stroke="#9aa0a6" stroke-width="0.8" stroke-dasharray="1 1.5"/>
<path d="M473.35 387.20 L523.30 578.60" fill="none" stroke="#5d6a76" stroke-width="2.2" stroke-dasharray="2.2 6" opacity="0.8" shape-rendering="crispEdges"/>
<path d="M492.40 382.05 L542.15 573.35" fill="none" stroke="#9aa0a6" stroke-width="0.8" stroke-dasharray="1 1.5"/>
<path d="M492.40 382.05 L542.15 573.35" fill="none" stroke="#5d6a76" stroke-width="2.2" stroke-dasharray="2.2 6" opacity="0.8" shape-rendering="crispEdges"/>
<path d="M351.71 475.71 L356.01 475.56 L359.94 475.13 L363.77 474.45 L367.51 473.51 L371.13 472.34 L374.64 470.95 L378.01 469.35 L381.24 467.57 L384.31 465.61 L387.21 463.50 L389.92 461.25 L392.44 458.88 L394.75 456.42 L396.84 453.88 L398.69 451.28 L400.31 448.65 L401.67 446.01 L402.78 443.39 L403.63 440.80 L404.22 438.26 L404.56 435.80 L404.63 433.43 L404.46 431.15 L403.97 428.64 L399.27 406.46" fill="none" stroke="#9aa0a6" stroke-width="0.8" stroke-dasharray="1 1.5"/>
<path d="M351.71 475.71 L356.01 475.56 L359.94 475.13 L363.77 474.45 L367.51 473.51 L371.13 472.34 L374.64 470.95 L378.01 469.35 L381.24 467.57 L384.31 465.61 L387.21 463.50 L389.92 461.25 L392.44 458.88 L394.75 456.42 L396.84 453.88 L398.69 451.28 L400.31 448.65 L401.67 446.01 L402.78 443.39 L403.63 440.80 L404.22 438.26 L404.56 435.80 L404.63 433.43 L404.46 431.15 L403.97 428.64 L399.27 406.46" fill="none" stroke="#5d6a76" stroke-width="2.2" stroke-dasharray="2.2 6" opacity="0.75" shape-rendering="crispEdges"/>
<path d="M352.29 491.69 L357.15 491.51 L362.20 490.97 L367.12 490.09 L371.91 488.89 L376.54 487.40 L381.01 485.62 L385.31 483.59 L389.41 481.32 L393.32 478.83 L397.02 476.13 L400.51 473.25 L403.76 470.19 L406.77 466.98 L409.53 463.62 L412.02 460.13 L414.24 456.52 L416.16 452.81 L417.77 449.00 L419.04 445.11 L419.96 441.15 L420.50 437.14 L420.63 433.09 L420.32 429.05 L419.63 425.36 L414.93 403.14" fill="none" stroke="#9aa0a6" stroke-width="0.8" stroke-dasharray="1 1.5"/>
<path d="M352.29 491.69 L357.15 491.51 L362.20 490.97 L367.12 490.09 L371.91 488.89 L376.54 487.40 L381.01 485.62 L385.31 483.59 L389.41 481.32 L393.32 478.83 L397.02 476.13 L400.51 473.25 L403.76 470.19 L406.77 466.98 L409.53 463.62 L412.02 460.13 L414.24 456.52 L416.16 452.81 L417.77 449.00 L419.04 445.11 L419.96 441.15 L420.50 437.14 L420.63 433.09 L420.32 429.05 L419.63 425.36 L414.93 403.14" fill="none" stroke="#5d6a76" stroke-width="2.2" stroke-dasharray="2.2 6" opacity="0.75" shape-rendering="crispEdges"/>
<path d="M351.72 507.10 L361.16 506.78 L369.98 505.86 L378.45 504.38 L386.58 502.38 L394.36 499.90 L401.78 496.99 L408.83 493.68 L415.50 490.01 L421.79 486.04 L427.68 481.79 L433.16 477.32 L438.22 472.67 L442.84 467.89 L447.02 463.01 L450.74 458.09 L454.00 453.19 L456.77 448.35 L459.06 443.62 L460.86 439.07 L462.16 434.76 L462.98 430.75 L463.32 427.11 L463.23 423.92 L462.68 420.86 L456.28 391.50" fill="none" stroke="#9aa0a6" stroke-width="0.8" stroke-dasharray="1 1.5"/>
<path d="M351.72 507.10 L361.16 506.78 L369.98 505.86 L378.45 504.38 L386.58 502.38 L394.36 499.90 L401.78 496.99 L408.83 493.68 L415.50 490.01 L421.79 486.04 L427.68 481.79 L433.16 477.32 L438.22 472.67 L442.84 467.89 L447.02 463.01 L450.74 458.09 L454.00 453.19 L456.77 448.35 L459.06 443.62 L460.86 439.07 L462.16 434.76 L462.98 430.75 L463.32 427.11 L463.23 423.92 L462.68 420.86 L456.28 391.50" fill="none" stroke="#5d6a76" stroke-width="2.2" stroke-dasharray="2.2 6" opacity="0.75" shape-rendering="crispEdges"/>
<path d="M352.28 523.10 L362.26 522.75 L372.18 521.71 L381.74 520.04 L390.92 517.78 L399.71 514.98 L408.10 511.68 L416.08 507.94 L423.63 503.80 L430.74 499.30 L437.41 494.49 L443.63 489.42 L449.38 484.13 L454.67 478.66 L459.47 473.06 L463.79 467.36 L467.60 461.60 L470.92 455.83 L473.71 450.06 L475.97 444.34 L477.67 438.69 L478.80 433.12 L479.31 427.66 L479.15 422.34 L478.32 417.54 L471.92 388.10" fill="none" stroke="#9aa0a6" stroke-width="0.8" stroke-dasharray="1 1.5"/>
<path d="M352.28 523.10 L362.26 522.75 L372.18 521.71 L381.74 520.04 L390.92 517.78 L399.71 514.98 L408.10 511.68 L416.08 507.94 L423.63 503.80 L430.74 499.30 L437.41 494.49 L443.63 489.42 L449.38 484.13 L454.67 478.66 L459.47 473.06 L463.79 467.36 L467.60 461.60 L470.92 455.83 L473.71 450.06 L475.97 444.34 L477.67 438.69 L478.80 433.12 L479.31 427.66 L479.15 422.34 L478.32 417.54 L471.92 388.10" fill="none" stroke="#5d6a76" stroke-width="2.2" stroke-dasharray="2.2 6" opacity="0.75" shape-rendering="crispEdges"/>
<path d="M352.14 491.40 L365.32 491.63 L378.01 492.29 L390.09 493.35 L401.56 494.80 L412.45 496.63 L422.76 498.81 L432.50 501.33 L441.69 504.18 L450.34 507.33 L458.46 510.78 L466.05 514.50 L473.14 518.48 L479.72 522.69 L485.80 527.13 L491.40 531.77 L496.53 536.59 L501.18 541.57 L505.37 546.70 L509.10 551.95 L512.39 557.29 L515.25 562.71 L517.69 568.18 L519.71 573.68 L521.27 578.93" fill="none" stroke="#9aa0a6" stroke-width="0.8" stroke-dasharray="1 1.5"/>
<path d="M352.14 491.40 L365.32 491.63 L378.01 492.29 L390.09 493.35 L401.56 494.80 L412.45 496.63 L422.76 498.81 L432.50 501.33 L441.69 504.18 L450.34 507.33 L458.46 510.78 L466.05 514.50 L473.14 518.48 L479.72 522.69 L485.80 527.13 L491.40 531.77 L496.53 536.59 L501.18 541.57 L505.37 546.70 L509.10 551.95 L512.39 557.29 L515.25 562.71 L517.69 568.18 L519.71 573.68 L521.27 578.93" fill="none" stroke="#5d6a76" stroke-width="2.2" stroke-dasharray="2.2 6" opacity="0.75" shape-rendering="crispEdges"/>
<path d="M351.86 507.40 L364.78 507.62 L376.91 508.25 L388.39 509.26 L399.24 510.63 L409.47 512.35 L419.10 514.39 L428.13 516.73 L436.59 519.35 L444.48 522.22 L451.82 525.34 L458.63 528.67 L464.91 532.20 L470.69 535.90 L475.99 539.77 L480.82 543.76 L485.19 547.88 L489.13 552.11 L492.65 556.42 L495.77 560.79 L498.50 565.23 L500.86 569.70 L502.87 574.20 L504.53 578.71 L505.93 583.47" fill="none" stroke="#9aa0a6" stroke-width="0.8" stroke-dasharray="1 1.5"/>
<path d="M351.86 507.40 L364.78 507.62 L376.91 508.25 L388.39 509.26 L399.24 510.63 L409.47 512.35 L419.10 514.39 L428.13 516.73 L436.59 519.35 L444.48 522.22 L451.82 525.34 L458.63 528.67 L464.91 532.20 L470.69 535.90 L475.99 539.77 L480.82 543.76 L485.19 547.88 L489.13 552.11 L492.65 556.42 L495.77 560.79 L498.50 565.23 L500.86 569.70 L502.87 574.20 L504.53 578.71 L505.93 583.47" fill="none" stroke="#5d6a76" stroke-width="2.2" stroke-dasharray="2.2 6" opacity="0.75" shape-rendering="crispEdges"/>
<path d="M352.15 522.90 L361.64 523.08 L370.73 523.62 L379.30 524.51 L387.35 525.72 L394.91 527.25 L402.00 529.09 L408.63 531.21 L414.81 533.62 L420.56 536.28 L425.90 539.19 L430.83 542.33 L435.37 545.68 L439.52 549.21 L443.30 552.91 L446.72 556.75 L449.81 560.70 L452.56 564.73 L455.02 568.83 L457.20 572.97 L459.11 577.12 L460.79 581.27 L462.26 585.39 L463.53 589.47 L464.61 593.37" fill="none" stroke="#9aa0a6" stroke-width="0.8" stroke-dasharray="1 1.5"/>
<path d="M352.15 522.90 L361.64 523.08 L370.73 523.62 L379.30 524.51 L387.35 525.72 L394.91 527.25 L402.00 529.09 L408.63 531.21 L414.81 533.62 L420.56 536.28 L425.90 539.19 L430.83 542.33 L435.37 545.68 L439.52 549.21 L443.30 552.91 L446.72 556.75 L449.81 560.70 L452.56 564.73 L455.02 568.83 L457.20 572.97 L459.11 577.12 L460.79 581.27 L462.26 585.39 L463.53 589.47 L464.61 593.37" fill="none" stroke="#5d6a76" stroke-width="2.2" stroke-dasharray="2.2 6" opacity="0.75" shape-rendering="crispEdges"/>
<path d="M351.85 538.90 L361.02 539.07 L369.45 539.57 L377.29 540.38 L384.58 541.48 L391.33 542.85 L397.56 544.46 L403.30 546.30 L408.56 548.35 L413.38 550.58 L417.78 552.98 L421.79 555.53 L425.43 558.22 L428.74 561.04 L431.74 563.97 L434.44 567.01 L436.89 570.14 L439.09 573.37 L441.07 576.67 L442.84 580.04 L444.43 583.48 L445.83 586.95 L447.08 590.46 L448.18 593.99 L449.19 597.63" fill="none" stroke="#9aa0a6" stroke-width="0.8" stroke-dasharray="1 1.5"/>
<path d="M351.85 538.90 L361.02 539.07 L369.45 539.57 L377.29 540.38 L384.58 541.48 L391.33 542.85 L397.56 544.46 L403.30 546.30 L408.56 548.35 L413.38 550.58 L417.78 552.98 L421.79 555.53 L425.43 558.22 L428.74 561.04 L431.74 563.97 L434.44 567.01 L436.89 570.14 L439.09 573.37 L441.07 576.67 L442.84 580.04 L444.43 583.48 L445.83 586.95 L447.08 590.46 L448.18 593.99 L449.19 597.63" fill="none" stroke="#5d6a76" stroke-width="2.2" stroke-dasharray="2.2 6" opacity="0.75" shape-rendering="crispEdges"/>
<path d="M352.15 543.20 L360.39 543.36 L368.26 543.81 L375.63 544.56 L382.51 545.59 L388.93 546.88 L394.90 548.42 L400.45 550.20 L405.59 552.22 L410.33 554.45 L414.69 556.89 L418.67 559.52 L422.30 562.31 L425.57 565.25 L428.50 568.30 L431.11 571.45 L433.40 574.67 L435.41 577.92 L437.15 581.19 L438.64 584.44 L439.91 587.66 L440.99 590.81 L441.90 593.88 L442.67 596.85 L443.30 599.62" fill="none" stroke="#9aa0a6" stroke-width="0.8" stroke-dasharray="1 1.5"/>
<path d="M352.15 543.20 L360.39 543.36 L368.26 543.81 L375.63 544.56 L382.51 545.59 L388.93 546.88 L394.90 548.42 L400.45 550.20 L405.59 552.22 L410.33 554.45 L414.69 556.89 L418.67 559.52 L422.30 562.31 L425.57 565.25 L428.50 568.30 L431.11 571.45 L433.40 574.67 L435.41 577.92 L437.15 581.19 L438.64 584.44 L439.91 587.66 L440.99 590.81 L441.90 593.88 L442.67 596.85 L443.30 599.62" fill="none" stroke="#5d6a76" stroke-width="2.2" stroke-dasharray="2.2 6" opacity="0.75" shape-rendering="crispEdges"/>
<path d="M351.85 559.20 L359.79 559.34 L367.00 559.76 L373.65 560.44 L379.77 561.35 L385.36 562.47 L390.46 563.79 L395.09 565.28 L399.27 566.92 L403.03 568.69 L406.39 570.57 L409.40 572.55 L412.08 574.62 L414.45 576.75 L416.56 578.95 L418.43 581.21 L420.08 583.52 L421.53 585.88 L422.81 588.29 L423.92 590.73 L424.90 593.19 L425.75 595.67 L426.48 598.16 L427.12 600.64 L427.70 603.18" fill="none" stroke="#9aa0a6" stroke-width="0.8" stroke-dasharray="1 1.5"/>
<path d="M351.85 559.20 L359.79 559.34 L367.00 559.76 L373.65 560.44 L379.77 561.35 L385.36 562.47 L390.46 563.79 L395.09 565.28 L399.27 566.92 L403.03 568.69 L406.39 570.57 L409.40 572.55 L412.08 574.62 L414.45 576.75 L416.56 578.95 L418.43 581.21 L420.08 583.52 L421.53 585.88 L422.81 588.29 L423.92 590.73 L424.90 593.19 L425.75 595.67 L426.48 598.16 L427.12 600.64 L427.70 603.18" fill="none" stroke="#5d6a76" stroke-width="2.2" stroke-dasharray="2.2 6" opacity="0.75" shape-rendering="crispEdges"/>
<path d="M377.70 409.90 L383.50 433.50 L383.78 434.88 L384.01 436.26 L384.17 437.63 L384.26 438.99 L384.28 440.34 L384.23 441.67 L384.10 442.98 L383.89 444.25 L383.60 445.48 L383.22 446.68 L382.75 447.83 L382.19 448.93 L381.53 449.96 L380.77 450.94 L379.91 451.85 L378.94 452.69 L377.87 453.44 L376.68 454.12 L375.38 454.70 L373.95 455.19 L372.41 455.58 L370.73 455.87 L368.93 456.04 L367.00 456.10 L352.00 456.10" fill="none" stroke="#9aa0a6" stroke-width="0.8" stroke-dasharray="1 1.5"/>
<path d="M377.70 409.90 L383.50 433.50 L383.78 434.88 L384.01 436.26 L384.17 437.63 L384.26 438.99 L384.28 440.34 L384.23 441.67 L384.10 442.98 L383.89 444.25 L383.60 445.48 L383.22 446.68 L382.75 447.83 L382.19 448.93 L381.53 449.96 L380.77 450.94 L379.91 451.85 L378.94 452.69 L377.87 453.44 L376.68 454.12 L375.38 454.70 L373.95 455.19 L372.41 455.58 L370.73 455.87 L368.93 456.04 L367.00 456.10 L352.00 456.10" fill="none" stroke="#5d6a76" stroke-width="2.8" stroke-dasharray="2.8 5" opacity="1.0" shape-rendering="crispEdges"/>
<path d="M352.00 558.80 L371.00 558.80 L375.41 558.98 L379.65 559.35 L383.70 559.90 L387.59 560.63 L391.29 561.52 L394.82 562.59 L398.17 563.81 L401.35 565.20 L404.35 566.74 L407.18 568.42 L409.83 570.26 L412.31 572.23 L414.62 574.33 L416.75 576.56 L418.70 578.92 L420.48 581.40 L422.09 583.99 L423.52 586.70 L424.78 589.51 L425.87 592.42 L426.79 595.44 L427.53 598.54 L428.10 601.73 L428.50 605.00 L427.50 601.40" fill="none" stroke="#9aa0a6" stroke-width="0.8" stroke-dasharray="1 1.5"/>
<path d="M352.00 558.80 L371.00 558.80 L375.41 558.98 L379.65 559.35 L383.70 559.90 L387.59 560.63 L391.29 561.52 L394.82 562.59 L398.17 563.81 L401.35 565.20 L404.35 566.74 L407.18 568.42 L409.83 570.26 L412.31 572.23 L414.62 574.33 L416.75 576.56 L418.70 578.92 L420.48 581.40 L422.09 583.99 L423.52 586.70 L424.78 589.51 L425.87 592.42 L426.79 595.44 L427.53 598.54 L428.10 601.73 L428.50 605.00 L427.50 601.40" fill="none" stroke="#5d6a76" stroke-width="2.8" stroke-dasharray="2.8 5" opacity="1.0" shape-rendering="crispEdges"/>
<path d="M396.40 407.35 L396.77 409.00 L397.14 410.64 L397.52 412.29 L397.89 413.93 L398.26 415.58 L398.63 417.23 L399.01 418.87 L399.38 420.52 L399.75 422.16 L400.12 423.81 L400.50 425.46 L400.87 427.10 L401.22 428.75 L401.51 430.41 L401.75 432.07 L401.90 433.74 L402.01 435.41 L402.04 437.07 L401.99 438.73 L401.87 440.38 L401.66 442.02 L401.41 443.66 L401.04 445.27 L400.63 446.87 L400.14 448.45 L399.59 450.01 L398.96 451.54 L398.27 453.05 L397.50 454.53 L396.66 455.97 L395.75 457.37 L394.76 458.73 L393.71 460.04 L392.58 461.29 L391.39 462.48 L390.14 463.61 L388.82 464.66 L387.45 465.65 L386.03 466.55 L384.57 467.37 L383.07 468.11 L381.55 468.79 L379.99 469.39 L378.43 469.94 L376.83 470.38 L375.24 470.81 L373.62 471.17 L372.00 471.53 L370.37 471.85 L368.73 472.15 L367.08 472.42 L365.43 472.66 L363.77 472.89 L362.09 473.06 L360.42 473.23 L358.74 473.35 L357.06 473.45 L355.37 473.53 L353.69 473.57 L352.00 473.60" fill="none" stroke="#6a7681" stroke-width="7" stroke-dasharray="3 4.8" opacity="0.9" shape-rendering="crispEdges"/>
<path d="M396.40 407.35 L396.77 409.00 L397.14 410.64 L397.52 412.29 L397.89 413.93 L398.26 415.58 L398.63 417.23 L399.01 418.87 L399.38 420.52 L399.75 422.16 L400.12 423.81 L400.50 425.46 L400.87 427.10 L401.22 428.75 L401.51 430.41 L401.75 432.07 L401.90 433.74 L402.01 435.41 L402.04 437.07 L401.99 438.73 L401.87 440.38 L401.66 442.02 L401.41 443.66 L401.04 445.27 L400.63 446.87 L400.14 448.45 L399.59 450.01 L398.96 451.54 L398.27 453.05 L397.50 454.53 L396.66 455.97 L395.75 457.37 L394.76 458.73 L393.71 460.04 L392.58 461.29 L391.39 462.48 L390.14 463.61 L388.82 464.66 L387.45 465.65 L386.03 466.55 L384.57 467.37 L383.07 468.11 L381.55 468.79 L379.99 469.39 L378.43 469.94 L376.83 470.38 L375.24 470.81 L373.62 471.17 L372.00 471.53 L370.37 471.85 L368.73 472.15 L367.08 472.42 L365.43 472.66 L363.77 472.89 L362.09 473.06 L360.42 473.23 L358.74 473.35 L357.06 473.45 L355.37 473.53 L353.69 473.57 L352.00 473.60" fill="none" stroke="#8a9096" stroke-width="0.9" stroke-dasharray="1 1.2"/>
<path d="M352.00 541.05 L354.01 541.09 L356.03 541.13 L358.04 541.16 L360.06 541.20 L362.07 541.29 L364.08 541.41 L366.09 541.53 L368.11 541.65 L370.11 541.82 L372.12 542.03 L374.12 542.23 L376.12 542.45 L378.12 542.72 L380.11 543.02 L382.11 543.32 L384.09 543.66 L386.07 544.04 L388.04 544.44 L390.01 544.87 L391.97 545.34 L393.92 545.84 L395.86 546.38 L397.80 546.94 L399.72 547.56 L401.62 548.21 L403.52 548.89 L405.39 549.62 L407.25 550.41 L409.09 551.22 L410.91 552.09 L412.70 553.01 L414.48 553.96 L416.21 554.98 L417.94 556.02 L419.61 557.14 L421.26 558.30 L422.87 559.51 L424.43 560.78 L425.97 562.08 L427.44 563.46 L428.89 564.86 L430.26 566.33 L431.61 567.83 L432.88 569.39 L434.12 570.98 L435.28 572.62 L436.41 574.29 L437.47 576.01 L438.48 577.75 L439.42 579.53 L440.32 581.33 L441.16 583.17 L441.95 585.02 L442.69 586.89 L443.38 588.78 L444.02 590.69 L444.63 592.62 L445.18 594.55 L445.70 596.50 L446.20 598.45" fill="none" stroke="#6a7681" stroke-width="7" stroke-dasharray="3 4.8" opacity="0.9" shape-rendering="crispEdges"/>
<path d="M352.00 541.05 L354.01 541.09 L356.03 541.13 L358.04 541.16 L360.06 541.20 L362.07 541.29 L364.08 541.41 L366.09 541.53 L368.11 541.65 L370.11 541.82 L372.12 542.03 L374.12 542.23 L376.12 542.45 L378.12 542.72 L380.11 543.02 L382.11 543.32 L384.09 543.66 L386.07 544.04 L388.04 544.44 L390.01 544.87 L391.97 545.34 L393.92 545.84 L395.86 546.38 L397.80 546.94 L399.72 547.56 L401.62 548.21 L403.52 548.89 L405.39 549.62 L407.25 550.41 L409.09 551.22 L410.91 552.09 L412.70 553.01 L414.48 553.96 L416.21 554.98 L417.94 556.02 L419.61 557.14 L421.26 558.30 L422.87 559.51 L424.43 560.78 L425.97 562.08 L427.44 563.46 L428.89 564.86 L430.26 566.33 L431.61 567.83 L432.88 569.39 L434.12 570.98 L435.28 572.62 L436.41 574.29 L437.47 576.01 L438.48 577.75 L439.42 579.53 L440.32 581.33 L441.16 583.17 L441.95 585.02 L442.69 586.89 L443.38 588.78 L444.02 590.69 L444.63 592.62 L445.18 594.55 L445.70 596.50 L446.20 598.45" fill="none" stroke="#8a9096" stroke-width="0.9" stroke-dasharray="1 1.2"/>
<path d="M-5.00 456.10 L352.00 456.10" fill="none" stroke="#9aa0a6" stroke-width="0.8" stroke-dasharray="1 1.5"/>
<path d="M-5.00 456.10 L352.00 456.10" fill="none" stroke="#5d6a76" stroke-width="2.8" stroke-dasharray="2.8 5" opacity="1.0" shape-rendering="crispEdges"/>
<path d="M-5.00 473.70 L352.00 473.70" fill="none" stroke="#6a7681" stroke-width="7" stroke-dasharray="3 4.8" opacity="0.9" shape-rendering="crispEdges"/>
<path d="M-5.00 473.70 L352.00 473.70" fill="none" stroke="#8a9096" stroke-width="0.9" stroke-dasharray="1 1.2"/>
<path d="M-5.00 492.10 L352.00 492.10" fill="none" stroke="#9aa0a6" stroke-width="0.8" stroke-dasharray="1 1.5"/>
<path d="M-5.00 492.10 L352.00 492.10" fill="none" stroke="#5d6a76" stroke-width="2.8" stroke-dasharray="2.8 5" opacity="1.0" shape-rendering="crispEdges"/>
<path d="M-5.00 507.80 L352.00 507.80" fill="none" stroke="#e8a070" stroke-width="0.8" stroke-dasharray="1 1.5"/>
<path d="M-5.00 507.80 L352.00 507.80" fill="none" stroke="#5d6a76" stroke-width="2.8" stroke-dasharray="2.8 5" opacity="1.0" shape-rendering="crispEdges"/>
<path d="M-5.00 523.60 L352.00 523.60" fill="none" stroke="#9aa0a6" stroke-width="0.8" stroke-dasharray="1 1.5"/>
<path d="M-5.00 523.60 L352.00 523.60" fill="none" stroke="#5d6a76" stroke-width="2.8" stroke-dasharray="2.8 5" opacity="1.0" shape-rendering="crispEdges"/>
<path d="M-5.00 541.20 L352.00 541.20" fill="none" stroke="#6a7681" stroke-width="7" stroke-dasharray="3 4.8" opacity="0.9" shape-rendering="crispEdges"/>
<path d="M-5.00 541.20 L352.00 541.20" fill="none" stroke="#8a9096" stroke-width="0.9" stroke-dasharray="1 1.2"/>
<path d="M-5.00 558.80 L352.00 558.80" fill="none" stroke="#9aa0a6" stroke-width="0.8" stroke-dasharray="1 1.5"/>
<path d="M-5.00 558.80 L352.00 558.80" fill="none" stroke="#5d6a76" stroke-width="2.8" stroke-dasharray="2.8 5" opacity="1.0" shape-rendering="crispEdges"/>
<path d="M305.90 -9.50 L305.92 -9.42 L305.85 -9.74 L305.71 -10.36 L305.53 -11.17 L305.32 -12.08 L305.12 -12.99 L304.94 -13.78 L304.80 -14.38 L304.74 -14.66 L304.77 -14.53 L304.92 -13.89 L305.21 -12.64 L305.65 -10.68 L306.29 -7.90 L307.13 -4.21 L308.20 0.50 L309.54 6.42 L311.16 13.56 L313.02 21.79 L315.10 30.95 L317.34 40.89 L319.73 51.46 L322.23 62.50 L324.81 73.88 L327.42 85.42 L330.05 96.99 L332.65 108.44 L335.19 119.61 L337.65 130.35 L339.97 140.51 L342.14 149.95 L344.12 158.50 L345.92 166.26 L347.59 173.46 L349.15 180.18 L350.61 186.49 L352.00 192.48 L353.34 198.21 L354.64 203.77 L355.93 209.23 L357.23 214.67 L358.55 220.16 L359.92 225.78 L361.35 231.60 L362.87 237.71 L364.49 244.18 L366.23 251.08 L368.12 258.50 L370.22 266.64 L372.55 275.57 L375.06 285.16 L377.73 295.25 L380.51 305.71 L383.36 316.40 L386.24 327.18 L389.11 337.90 L391.94 348.43 L394.68 358.62 L397.30 368.33 L399.75 377.43 L401.99 385.76 L403.99 393.20 L405.71 399.59 L407.10 404.80" fill="none" stroke="#000" stroke-width="2.5" stroke-linejoin="round" shape-rendering="crispEdges"/>
<path d="M456.90 595.50 L478.80 682.50 L480.31 688.50" fill="none" stroke="#000" stroke-width="2.5" stroke-linejoin="round" shape-rendering="crispEdges"/>
<path d="M407.10 404.80 L456.90 595.50" fill="none" stroke="#000" stroke-width="2.5" stroke-linejoin="round" shape-rendering="crispEdges"/>
<path d="M326.10 -9.50 L326.12 -9.42 L326.05 -9.74 L325.91 -10.36 L325.72 -11.17 L325.52 -12.08 L325.32 -12.99 L325.14 -13.78 L325.00 -14.38 L324.94 -14.66 L324.97 -14.53 L325.12 -13.89 L325.41 -12.64 L325.85 -10.68 L326.49 -7.90 L327.33 -4.21 L328.40 0.50 L329.74 6.42 L331.36 13.56 L333.23 21.79 L335.30 30.95 L337.55 40.89 L339.94 51.46 L342.44 62.50 L345.02 73.88 L347.63 85.42 L350.26 96.99 L352.86 108.44 L355.41 119.61 L357.86 130.35 L360.19 140.51 L362.36 149.95 L364.34 158.50 L366.15 166.27 L367.82 173.50 L369.38 180.26 L370.85 186.63 L372.24 192.67 L373.59 198.47 L374.90 204.08 L376.19 209.59 L377.49 215.07 L378.82 220.58 L380.18 226.21 L381.61 232.01 L383.13 238.07 L384.74 244.46 L386.47 251.24 L388.34 258.50 L390.42 266.43 L392.71 275.08 L395.20 284.34 L397.82 294.07 L400.56 304.13 L403.36 314.40 L406.20 324.73 L409.02 335.00 L411.80 345.08 L414.49 354.82 L417.06 364.11 L419.47 372.80 L421.68 380.77 L423.64 387.88 L425.33 394.00 L426.70 399.00" fill="none" stroke="#000" stroke-width="2.5" stroke-linejoin="round" shape-rendering="crispEdges"/>
<path d="M475.60 591.20 L499.70 682.50 L501.28 688.50" fill="none" stroke="#000" stroke-width="2.5" stroke-linejoin="round" shape-rendering="crispEdges"/>
<path d="M426.70 399.00 L475.60 591.20" fill="none" stroke="#000" stroke-width="2.5" stroke-linejoin="round" shape-rendering="crispEdges"/>
<path d="M346.30 -9.50 L346.32 -9.42 L346.25 -9.74 L346.11 -10.36 L345.92 -11.17 L345.72 -12.08 L345.51 -12.99 L345.33 -13.78 L345.20 -14.38 L345.14 -14.66 L345.17 -14.53 L345.32 -13.89 L345.60 -12.64 L346.05 -10.68 L346.69 -7.90 L347.53 -4.21 L348.60 0.50 L349.95 6.42 L351.57 13.56 L353.43 21.79 L355.50 30.95 L357.75 40.89 L360.15 51.46 L362.65 62.50 L365.23 73.88 L367.85 85.42 L370.47 96.99 L373.08 108.44 L375.63 119.61 L378.08 130.35 L380.41 140.51 L382.58 149.95 L384.56 158.50 L386.37 166.28 L388.06 173.53 L389.63 180.33 L391.13 186.74 L392.55 192.83 L393.92 198.67 L395.25 204.33 L396.57 209.88 L397.88 215.39 L399.22 220.92 L400.58 226.55 L402.01 232.34 L403.50 238.36 L405.08 244.68 L406.76 251.37 L408.56 258.50 L410.55 266.26 L412.73 274.70 L415.08 283.70 L417.55 293.14 L420.12 302.88 L422.75 312.81 L425.39 322.79 L428.03 332.70 L430.62 342.42 L433.13 351.81 L435.52 360.76 L437.76 369.14 L439.82 376.82 L441.65 383.67 L443.22 389.57 L444.50 394.40" fill="none" stroke="#000" stroke-width="2.5" stroke-linejoin="round" shape-rendering="crispEdges"/>
<path d="M494.90 585.30 L520.20 682.50 L521.76 688.50" fill="none" stroke="#000" stroke-width="2.5" stroke-linejoin="round" shape-rendering="crispEdges"/>
<path d="M444.50 394.40 L494.90 585.30" fill="none" stroke="#000" stroke-width="2.5" stroke-linejoin="round" shape-rendering="crispEdges"/>
<path d="M366.50 -9.50 L366.52 -9.42 L366.45 -9.74 L366.31 -10.36 L366.12 -11.17 L365.92 -12.08 L365.71 -12.99 L365.53 -13.78 L365.40 -14.38 L365.34 -14.66 L365.37 -14.53 L365.52 -13.89 L365.80 -12.64 L366.25 -10.68 L366.88 -7.90 L367.73 -4.21 L368.80 0.50 L370.15 6.42 L371.77 13.56 L373.63 21.79 L375.71 30.95 L377.96 40.89 L380.35 51.46 L382.86 62.50 L385.44 73.88 L388.06 85.42 L390.69 96.99 L393.29 108.44 L395.84 119.61 L398.30 130.35 L400.63 140.51 L402.80 149.95 L404.79 158.50 L406.59 166.29 L408.28 173.56 L409.87 180.39 L411.36 186.84 L412.79 192.98 L414.17 198.87 L415.51 204.58 L416.83 210.17 L418.15 215.71 L419.48 221.26 L420.85 226.89 L422.27 232.66 L423.76 238.64 L425.33 244.90 L427.00 251.50 L428.79 258.50 L430.75 266.09 L432.90 274.31 L435.21 283.06 L437.65 292.20 L440.17 301.63 L442.75 311.22 L445.35 320.85 L447.94 330.40 L450.49 339.76 L452.95 348.80 L455.29 357.41 L457.49 365.47 L459.50 372.86 L461.30 379.46 L462.84 385.14 L464.10 389.80" fill="none" stroke="#000" stroke-width="2.5" stroke-linejoin="round" shape-rendering="crispEdges"/>
<path d="M513.60 581.20 L540.60 682.50 L542.20 688.50" fill="none" stroke="#000" stroke-width="2.5" stroke-linejoin="round" shape-rendering="crispEdges"/>
<path d="M464.10 389.80 L513.60 581.20" fill="none" stroke="#000" stroke-width="2.5" stroke-linejoin="round" shape-rendering="crispEdges"/>
<path d="M386.70 -9.50 L386.72 -9.42 L386.65 -9.74 L386.51 -10.36 L386.32 -11.17 L386.12 -12.08 L385.91 -12.99 L385.73 -13.78 L385.60 -14.38 L385.54 -14.66 L385.57 -14.53 L385.71 -13.89 L386.00 -12.64 L386.45 -10.68 L387.08 -7.90 L387.93 -4.21 L389.00 0.50 L390.35 6.42 L391.97 13.56 L393.84 21.79 L395.91 30.95 L398.17 40.89 L400.56 51.46 L403.07 62.50 L405.65 73.88 L408.27 85.42 L410.90 96.99 L413.51 108.44 L416.06 119.61 L418.52 130.35 L420.85 140.51 L423.02 149.95 L425.01 158.50 L426.82 166.30 L428.52 173.60 L430.11 180.47 L431.63 186.97 L433.07 193.16 L434.46 199.10 L435.82 204.86 L437.16 210.49 L438.49 216.07 L439.83 221.64 L441.20 227.27 L442.61 233.02 L444.08 238.96 L445.63 245.15 L447.26 251.64 L449.01 258.50 L450.90 265.90 L452.98 273.88 L455.19 282.33 L457.52 291.15 L459.92 300.21 L462.38 309.42 L464.85 318.65 L467.30 327.80 L469.71 336.75 L472.04 345.40 L474.26 353.63 L476.34 361.33 L478.24 368.39 L479.94 374.69 L481.41 380.13 L482.60 384.60" fill="none" stroke="#000" stroke-width="2.5" stroke-linejoin="round" shape-rendering="crispEdges"/>
<path d="M533.00 576.00 L560.20 682.50 L561.73 688.50" fill="none" stroke="#000" stroke-width="2.5" stroke-linejoin="round" shape-rendering="crispEdges"/>
<path d="M482.60 384.60 L533.00 576.00" fill="none" stroke="#000" stroke-width="2.5" stroke-linejoin="round" shape-rendering="crispEdges"/>
<path d="M406.20 -9.50 L406.22 -9.42 L406.15 -9.74 L406.01 -10.36 L405.82 -11.17 L405.62 -12.08 L405.41 -12.99 L405.23 -13.78 L405.10 -14.38 L405.04 -14.66 L405.07 -14.53 L405.21 -13.89 L405.50 -12.64 L405.95 -10.68 L406.58 -7.90 L407.43 -4.21 L408.50 0.50 L409.85 6.42 L411.47 13.56 L413.34 21.79 L415.42 30.95 L417.67 40.89 L420.07 51.46 L422.57 62.50 L425.16 73.88 L427.78 85.42 L430.42 96.99 L433.02 108.44 L435.57 119.61 L438.03 130.35 L440.37 140.51 L442.54 149.95 L444.53 158.50 L446.34 166.30 L448.04 173.63 L449.63 180.54 L451.15 187.09 L452.59 193.33 L453.98 199.33 L455.34 205.13 L456.67 210.81 L458.00 216.42 L459.35 222.01 L460.72 227.65 L462.13 233.38 L463.60 239.28 L465.15 245.39 L466.78 251.78 L468.53 258.50 L470.43 265.71 L472.50 273.45 L474.72 281.62 L477.05 290.11 L479.47 298.82 L481.93 307.65 L484.40 316.50 L486.86 325.25 L489.28 333.81 L491.61 342.06 L493.84 349.92 L495.92 357.27 L497.83 364.00 L499.54 370.02 L501.00 375.22 L502.20 379.50" fill="none" stroke="#000" stroke-width="2.5" stroke-linejoin="round" shape-rendering="crispEdges"/>
<path d="M551.30 570.70 L580.70 682.50 L582.28 688.50" fill="none" stroke="#000" stroke-width="2.5" stroke-linejoin="round" shape-rendering="crispEdges"/>
<path d="M502.20 379.50 L551.30 570.70" fill="none" stroke="#000" stroke-width="2.5" stroke-linejoin="round" shape-rendering="crispEdges"/>
<path d="M429.40 -9.50 L429.42 -9.42 L429.35 -9.74 L429.21 -10.36 L429.02 -11.17 L428.82 -12.08 L428.61 -12.99 L428.43 -13.78 L428.30 -14.38 L428.23 -14.66 L428.26 -14.53 L428.41 -13.89 L428.70 -12.64 L429.15 -10.68 L429.78 -7.90 L430.63 -4.21 L431.70 0.50 L433.05 6.42 L434.67 13.56 L436.54 21.79 L438.62 30.95 L440.88 40.89 L443.28 51.46 L445.78 62.50 L448.37 73.88 L451.00 85.42 L453.63 96.99 L456.24 108.44 L458.79 119.61 L461.25 130.35 L463.59 140.51 L465.77 149.95 L467.75 158.50 L469.57 166.32 L471.27 173.67 L472.89 180.62 L474.42 187.22 L475.88 193.52 L477.29 199.58 L478.67 205.45 L480.02 211.18 L481.36 216.82 L482.71 222.44 L484.08 228.07 L485.49 233.79 L486.94 239.64 L488.46 245.67 L490.06 251.94 L491.75 258.50 L493.58 265.49 L495.56 272.96 L497.68 280.80 L499.89 288.93 L502.17 297.24 L504.48 305.65 L506.81 314.05 L509.12 322.35 L511.39 330.46 L513.58 338.27 L515.66 345.70 L517.61 352.64 L519.40 359.01 L521.00 364.71 L522.37 369.64 L523.50 373.70" fill="none" stroke="#000" stroke-width="2.5" stroke-linejoin="round" shape-rendering="crispEdges"/>
<path d="M572.70 565.20 L603.90 682.50 L605.50 688.50" fill="none" stroke="#000" stroke-width="2.5" stroke-linejoin="round" shape-rendering="crispEdges"/>
<path d="M523.50 373.70 L572.70 565.20" fill="none" stroke="#000" stroke-width="2.5" stroke-linejoin="round" shape-rendering="crispEdges"/>
<path d="M283.30 -9.50 L283.32 -9.42 L283.25 -9.74 L283.11 -10.36 L282.93 -11.17 L282.72 -12.08 L282.52 -12.99 L282.34 -13.78 L282.21 -14.38 L282.14 -14.66 L282.18 -14.53 L282.32 -13.89 L282.61 -12.64 L283.06 -10.68 L283.69 -7.90 L284.53 -4.21 L285.60 0.50 L286.94 6.42 L288.56 13.56 L290.42 21.79 L292.49 30.95 L294.74 40.89 L297.12 51.46 L299.62 62.50 L302.19 73.88 L304.81 85.42 L307.43 96.99 L310.03 108.44 L312.57 119.61 L315.03 130.35 L317.35 140.51 L319.52 149.95 L321.50 158.50 L323.30 166.25 L324.96 173.42 L326.51 180.11 L327.96 186.37 L329.34 192.31 L330.66 197.99 L331.95 203.50 L333.23 208.91 L334.52 214.31 L335.84 219.78 L337.20 225.40 L338.64 231.25 L340.17 237.40 L341.81 243.94 L343.58 250.94 L345.50 258.50 L347.64 266.83 L350.02 276.00 L352.61 285.87 L355.35 296.28 L358.22 307.10 L361.16 318.16 L364.13 329.33 L367.10 340.45 L370.02 351.37 L372.86 361.96 L375.56 372.04 L378.10 381.49 L380.42 390.15 L382.49 397.87 L384.26 404.50 L385.70 409.90 L391.50 433.50 L391.92 435.37 L392.24 437.24 L392.46 439.10 L392.59 440.93 L392.63 442.74 L392.56 444.52 L392.39 446.25 L392.13 447.94 L391.75 449.58 L391.28 451.16 L390.70 452.68 L390.01 454.12 L389.22 455.49 L388.31 456.77 L387.30 457.96 L386.17 459.06 L384.94 460.04 L383.58 460.92 L382.11 461.68 L380.53 462.32 L378.83 462.83 L377.01 463.20 L375.06 463.42 L373.00 463.50 L-5.00 463.50" fill="none" stroke="#000" stroke-width="2.5" stroke-linejoin="round" shape-rendering="crispEdges"/>
<path d="M435.50 601.40 L456.00 682.50 L457.52 688.50" fill="none" stroke="#000" stroke-width="2.5" stroke-linejoin="round" shape-rendering="crispEdges"/>
<path d="M352.00 483.70 L356.58 483.54 L361.07 483.05 L365.45 482.27 L369.71 481.20 L373.84 479.87 L377.83 478.29 L381.66 476.47 L385.33 474.44 L388.82 472.22 L392.12 469.82 L395.21 467.25 L398.10 464.54 L400.76 461.70 L403.18 458.75 L405.36 455.71 L407.27 452.59 L408.92 449.41 L410.27 446.20 L411.34 442.95 L412.09 439.71 L412.53 436.47 L412.63 433.26 L412.39 430.10 L411.80 427.00 L407.10 404.80" fill="none" stroke="#000" stroke-width="2.5" stroke-linejoin="round" shape-rendering="crispEdges"/>
<path d="M352.00 515.10 L361.71 514.76 L371.08 513.79 L380.09 512.21 L388.75 510.08 L397.04 507.44 L404.94 504.33 L412.45 500.81 L419.57 496.90 L426.27 492.67 L432.55 488.14 L438.39 483.37 L443.80 478.40 L448.75 473.27 L453.24 468.03 L457.26 462.73 L460.80 457.40 L463.84 452.09 L466.38 446.84 L468.41 441.70 L469.92 436.72 L470.89 431.93 L471.32 427.39 L471.19 423.13 L470.50 419.20 L464.10 389.80" fill="none" stroke="#000" stroke-width="2.5" stroke-linejoin="round" shape-rendering="crispEdges"/>
<path d="M352.00 499.40 L365.05 499.63 L377.46 500.27 L389.24 501.30 L400.40 502.72 L410.96 504.49 L420.93 506.60 L430.32 509.03 L439.14 511.76 L447.41 514.78 L455.14 518.06 L462.34 521.59 L469.03 525.34 L475.21 529.30 L480.90 533.45 L486.11 537.77 L490.86 542.24 L495.15 546.84 L499.01 551.56 L502.44 556.37 L505.45 561.26 L508.06 566.20 L510.28 571.19 L512.12 576.19 L513.60 581.20" fill="none" stroke="#000" stroke-width="2.5" stroke-linejoin="round" shape-rendering="crispEdges"/>
<path d="M352.00 530.90 L361.33 531.08 L370.09 531.60 L378.29 532.45 L385.96 533.60 L393.12 535.05 L399.78 536.77 L405.96 538.76 L411.69 540.98 L416.97 543.43 L421.84 546.09 L426.31 548.93 L430.40 551.95 L434.13 555.13 L437.52 558.44 L440.58 561.88 L443.35 565.42 L445.83 569.05 L448.05 572.75 L450.02 576.51 L451.77 580.30 L453.31 584.11 L454.67 587.93 L455.86 591.73 L456.90 595.50" fill="none" stroke="#000" stroke-width="2.5" stroke-linejoin="round" shape-rendering="crispEdges"/>
<path d="M352.00 551.20 L360.09 551.35 L367.63 551.79 L374.64 552.50 L381.14 553.47 L387.14 554.67 L392.68 556.10 L397.77 557.74 L402.43 559.57 L406.68 561.57 L410.54 563.73 L414.04 566.04 L417.19 568.46 L420.01 571.00 L422.53 573.63 L424.77 576.33 L426.74 579.10 L428.47 581.90 L429.98 584.74 L431.28 587.58 L432.41 590.42 L433.37 593.24 L434.19 596.02 L434.90 598.75 L435.50 601.40" fill="none" stroke="#000" stroke-width="2.5" stroke-linejoin="round" shape-rendering="crispEdges"/>
<path d="M-5.00 483.70 L352.00 483.70" fill="none" stroke="#000" stroke-width="2.5" stroke-linejoin="round" shape-rendering="crispEdges"/>
<path d="M-5.00 499.40 L352.00 499.40" fill="none" stroke="#000" stroke-width="2.5" stroke-linejoin="round" shape-rendering="crispEdges"/>
<path d="M-5.00 515.10 L352.00 515.10" fill="none" stroke="#000" stroke-width="2.5" stroke-linejoin="round" shape-rendering="crispEdges"/>
<path d="M-5.00 530.90 L352.00 530.90" fill="none" stroke="#000" stroke-width="2.5" stroke-linejoin="round" shape-rendering="crispEdges"/>
<path d="M-5.00 551.20 L352.00 551.20" fill="none" stroke="#000" stroke-width="2.5" stroke-linejoin="round" shape-rendering="crispEdges"/>
<rect x="382.80" y="406.80" width="5.8" height="6.2" fill="#000" transform="rotate(0 385.70 409.90)"/>
<rect x="404.20" y="401.70" width="5.8" height="6.2" fill="#000" transform="rotate(0 407.10 404.80)"/>
<rect x="423.80" y="395.90" width="5.8" height="6.2" fill="#000" transform="rotate(0 426.70 399.00)"/>
<rect x="441.60" y="391.30" width="5.8" height="6.2" fill="#000" transform="rotate(0 444.50 394.40)"/>
<rect x="461.20" y="386.70" width="5.8" height="6.2" fill="#000" transform="rotate(0 464.10 389.80)"/>
<rect x="479.70" y="381.50" width="5.8" height="6.2" fill="#000" transform="rotate(0 482.60 384.60)"/>
<rect x="499.30" y="376.40" width="5.8" height="6.2" fill="#000" transform="rotate(0 502.20 379.50)"/>
<rect x="520.60" y="370.60" width="5.8" height="6.2" fill="#000" transform="rotate(0 523.50 373.70)"/>
<rect x="432.60" y="598.30" width="5.8" height="6.2" fill="#000" transform="rotate(0 435.50 601.40)"/>
<rect x="454.00" y="592.40" width="5.8" height="6.2" fill="#000" transform="rotate(0 456.90 595.50)"/>
<rect x="472.70" y="588.10" width="5.8" height="6.2" fill="#000" transform="rotate(0 475.60 591.20)"/>
<rect x="492.00" y="582.20" width="5.8" height="6.2" fill="#000" transform="rotate(0 494.90 585.30)"/>
<rect x="510.70" y="578.10" width="5.8" height="6.2" fill="#000" transform="rotate(0 513.60 581.20)"/>
<rect x="530.10" y="572.90" width="5.8" height="6.2" fill="#000" transform="rotate(0 533.00 576.00)"/>
<rect x="548.40" y="567.60" width="5.8" height="6.2" fill="#000" transform="rotate(0 551.30 570.70)"/>
<rect x="569.80" y="562.10" width="5.8" height="6.2" fill="#000" transform="rotate(0 572.70 565.20)"/>
<rect x="375.40" y="408.75" width="5.8" height="6.5" fill="#7d7d7d" transform="rotate(0 378.30 412.00)"/>
<rect x="390.25" y="403.30" width="10.5" height="7.8" fill="#7d7d7d" transform="rotate(0 395.50 407.20)"/>
<rect x="413.00" y="398.95" width="5.8" height="6.5" fill="#7d7d7d" transform="rotate(0 415.90 402.20)"/>
<rect x="432.90" y="394.05" width="5.8" height="6.5" fill="#7d7d7d" transform="rotate(0 435.80 397.30)"/>
<rect x="451.30" y="388.85" width="5.8" height="6.5" fill="#7d7d7d" transform="rotate(0 454.20 392.10)"/>
<rect x="470.80" y="383.65" width="5.8" height="6.5" fill="#7d7d7d" transform="rotate(0 473.70 386.90)"/>
<rect x="489.10" y="378.75" width="5.8" height="6.5" fill="#7d7d7d" transform="rotate(0 492.00 382.00)"/>
<rect x="508.75" y="372.90" width="10.5" height="7.8" fill="#7d7d7d" transform="rotate(0 514.00 376.80)"/>
<rect x="528.30" y="368.95" width="5.8" height="6.5" fill="#7d7d7d" transform="rotate(0 531.20 372.20)"/>
<rect x="424.10" y="599.85" width="5.8" height="6.5" fill="#7d7d7d" transform="rotate(0 427.00 603.10)"/>
<rect x="440.45" y="594.80" width="10.5" height="7.8" fill="#7d7d7d" transform="rotate(0 445.70 598.70)"/>
<rect x="463.40" y="589.75" width="5.8" height="6.5" fill="#7d7d7d" transform="rotate(0 466.30 593.00)"/>
<rect x="483.10" y="585.05" width="5.8" height="6.5" fill="#7d7d7d" transform="rotate(0 486.00 588.30)"/>
<rect x="501.10" y="580.25" width="5.8" height="6.5" fill="#7d7d7d" transform="rotate(0 504.00 583.50)"/>
<rect x="520.80" y="574.95" width="5.8" height="6.5" fill="#7d7d7d" transform="rotate(0 523.70 578.20)"/>
<rect x="539.50" y="570.45" width="5.8" height="6.5" fill="#7d7d7d" transform="rotate(0 542.40 573.70)"/>
<rect x="558.55" y="564.80" width="10.5" height="7.8" fill="#7d7d7d" transform="rotate(0 563.80 568.70)"/>
<rect x="577.80" y="560.25" width="5.8" height="6.5" fill="#7d7d7d" transform="rotate(0 580.70 563.50)"/>
<rect x="0.80" y="453.10" width="6" height="6" fill="#7d7d7d" transform="rotate(0 3.80 456.10)"/>
<rect x="0.80" y="469.20" width="6" height="9" fill="#7d7d7d" transform="rotate(0 3.80 473.70)"/>
<rect x="0.80" y="489.10" width="6" height="6" fill="#7d7d7d" transform="rotate(0 3.80 492.10)"/>
<rect x="0.80" y="504.80" width="6" height="6" fill="#7d7d7d" transform="rotate(0 3.80 507.80)"/>
<rect x="0.80" y="520.60" width="6" height="6" fill="#7d7d7d" transform="rotate(0 3.80 523.60)"/>
<rect x="0.80" y="536.70" width="6" height="9" fill="#7d7d7d" transform="rotate(0 3.80 541.20)"/>
<rect x="0.80" y="555.80" width="6" height="6" fill="#7d7d7d" transform="rotate(0 3.80 558.80)"/>
<rect x="0.80" y="460.75" width="6" height="5.5" fill="#000" transform="rotate(0 3.80 463.50)"/>
<rect x="0.80" y="480.95" width="6" height="5.5" fill="#000" transform="rotate(0 3.80 483.70)"/>
<rect x="0.80" y="496.65" width="6" height="5.5" fill="#000" transform="rotate(0 3.80 499.40)"/>
<rect x="0.80" y="512.35" width="6" height="5.5" fill="#000" transform="rotate(0 3.80 515.10)"/>
<rect x="0.80" y="528.15" width="6" height="5.5" fill="#000" transform="rotate(0 3.80 530.90)"/>
<rect x="0.80" y="548.45" width="6" height="5.5" fill="#000" transform="rotate(0 3.80 551.20)"/>
<rect x="34.80" y="453.10" width="6" height="6" fill="#7d7d7d" transform="rotate(0 37.80 456.10)"/>
<rect x="34.80" y="469.20" width="6" height="9" fill="#7d7d7d" transform="rotate(0 37.80 473.70)"/>
<rect x="34.80" y="489.10" width="6" height="6" fill="#7d7d7d" transform="rotate(0 37.80 492.10)"/>
<rect x="34.80" y="504.80" width="6" height="6" fill="#7d7d7d" transform="rotate(0 37.80 507.80)"/>
<rect x="34.80" y="520.60" width="6" height="6" fill="#7d7d7d" transform="rotate(0 37.80 523.60)"/>
<rect x="34.80" y="536.70" width="6" height="9" fill="#7d7d7d" transform="rotate(0 37.80 541.20)"/>
<rect x="34.80" y="555.80" width="6" height="6" fill="#7d7d7d" transform="rotate(0 37.80 558.80)"/>
<rect x="34.80" y="460.75" width="6" height="5.5" fill="#000" transform="rotate(0 37.80 463.50)"/>
<rect x="34.80" y="480.95" width="6" height="5.5" fill="#000" transform="rotate(0 37.80 483.70)"/>
<rect x="34.80" y="496.65" width="6" height="5.5" fill="#000" transform="rotate(0 37.80 499.40)"/>
<rect x="34.80" y="512.35" width="6" height="5.5" fill="#000" transform="rotate(0 37.80 515.10)"/>
<rect x="34.80" y="528.15" width="6" height="5.5" fill="#000" transform="rotate(0 37.80 530.90)"/>
<rect x="34.80" y="548.45" width="6" height="5.5" fill="#000" transform="rotate(0 37.80 551.20)"/>
<rect x="349.00" y="453.10" width="6" height="6" fill="#7d7d7d" transform="rotate(0 352.00 456.10)"/>
<rect x="349.00" y="469.20" width="6" height="9" fill="#7d7d7d" transform="rotate(0 352.00 473.70)"/>
<rect x="349.00" y="489.10" width="6" height="6" fill="#7d7d7d" transform="rotate(0 352.00 492.10)"/>
<rect x="349.00" y="504.80" width="6" height="6" fill="#7d7d7d" transform="rotate(0 352.00 507.80)"/>
<rect x="349.00" y="520.60" width="6" height="6" fill="#7d7d7d" transform="rotate(0 352.00 523.60)"/>
<rect x="349.00" y="536.70" width="6" height="9" fill="#7d7d7d" transform="rotate(0 352.00 541.20)"/>
<rect x="349.00" y="555.80" width="6" height="6" fill="#7d7d7d" transform="rotate(0 352.00 558.80)"/>
<rect x="349.00" y="460.75" width="6" height="5.5" fill="#000" transform="rotate(0 352.00 463.50)"/>
<rect x="349.00" y="480.95" width="6" height="5.5" fill="#000" transform="rotate(0 352.00 483.70)"/>
<rect x="349.00" y="496.65" width="6" height="5.5" fill="#000" transform="rotate(0 352.00 499.40)"/>
<rect x="349.00" y="512.35" width="6" height="5.5" fill="#000" transform="rotate(0 352.00 515.10)"/>
<rect x="349.00" y="528.15" width="6" height="5.5" fill="#000" transform="rotate(0 352.00 530.90)"/>
<rect x="349.00" y="548.45" width="6" height="5.5" fill="#000" transform="rotate(0 352.00 551.20)"/>
<rect x="492.50" y="391.50" width="5" height="5" fill="#a8acf8" transform="rotate(0 495.00 394.00)"/>
<rect x="506.80" y="390.50" width="5" height="5" fill="#a8acf8" transform="rotate(0 509.30 393.00)"/>
<rect x="559.00" y="519.50" width="5" height="5" fill="#a8acf8" transform="rotate(0 561.50 522.00)"/>
<rect x="562.50" y="533.00" width="5" height="5" fill="#a8acf8" transform="rotate(0 565.00 535.50)"/>
<rect x="447.50" y="603.50" width="5" height="5" fill="#a8acf8" transform="rotate(0 450.00 606.00)"/>
<rect x="462.50" y="603.50" width="5" height="5" fill="#a8acf8" transform="rotate(0 465.00 606.00)"/>
<rect x="448.00" y="265.50" width="12" height="12" fill="#0000ff" transform="rotate(0 454.00 271.50)"/>
<text x="454" y="264.0" font-family="Liberation Sans" font-size="12" fill="#2a2aff" textLength="34" lengthAdjust="spacingAndGlyphs">NPC_1</text>
<rect x="486.70" y="335.55" width="12.2" height="12.5" fill="#ff0000" transform="rotate(0 492.80 341.80)"/>
<text x="492" y="334.0" font-family="Liberation Sans" font-size="12" fill="#ff2a2a" textLength="20" lengthAdjust="spacingAndGlyphs">Ego</text>
</g></svg><div style="position:absolute;left:376.6px;top:803.8px;width:318.19999999999993px;height:4px;background:#e7eaea;border:1px solid #d6d6d6;border-radius:2px;box-sizing:border-box"></div><div style="position:absolute;left:684.6px;top:796.6px;width:9.5px;height:19.6px;background:#0078d7;border-radius:1px"></div><div style="position:absolute;left:376.6px;top:857px;width:318.19999999999993px;height:4px;background:#e7eaea;border:1px solid #d6d6d6;border-radius:2px;box-sizing:border-box"></div><div style="position:absolute;left:530.7px;top:849px;width:9.5px;height:19.6px;background:#0078d7;border-radius:1px"></div><div style="position:absolute;left:841px;top:798px;width:62px;height:17.7px;background:#fff;border:1px solid #e2e2e2;border-bottom:1.5px solid #8a8a8a;border-radius:2px;box-sizing:border-box"></div><div style="position:absolute;left:914.6px;top:797.8px;width:67px;height:19px;background:#fdfdfd;border:1px solid #d0d0d0;border-bottom-color:#c4c4c4;border-radius:3px;box-sizing:border-box"></div><div style="position:absolute;left:841px;top:851px;width:62px;height:17.7px;background:#fff;border:1px solid #e2e2e2;border-bottom:1.5px solid #8a8a8a;border-radius:2px;box-sizing:border-box"></div><div style="position:absolute;left:914.6px;top:850.4px;width:67px;height:19px;background:#fdfdfd;border:1px solid #d0d0d0;border-bottom-color:#c4c4c4;border-radius:3px;box-sizing:border-box"></div><div style="position:absolute;left:1091.5px;top:775.2px;width:133.3px;height:17.5px;background:#fff;border:1px solid #e2e2e2;border-bottom:1.5px solid #8a8a8a;border-radius:2px;box-sizing:border-box"></div><div style="position:absolute;left:1091.5px;top:802.9px;width:133.3px;height:17.8px;background:#fff;border:1px solid #e2e2e2;border-bottom:1.5px solid #8a8a8a;border-radius:2px;box-sizing:border-box"></div><div style="position:absolute;left:1091.5px;top:830.9px;width:133.3px;height:17.5px;background:#fff;border:1px solid #e2e2e2;border-bottom:1.5px solid #8a8a8a;border-radius:2px;box-sizing:border-box"></div><div style="position:absolute;left:1016px;top:866.3px;width:185px;height:19.2px;background:#fdfdfd;border:1px solid #d0d0d0;border-bottom-color:#c4c4c4;border-radius:3px;box-sizing:border-box"></div><div style="position:absolute;left:1044px;top:905px;width:1px;height:19px;background:#a0a0a0"></div><div style="position:absolute;left:1170px;top:905px;width:1px;height:19px;background:#a0a0a0"></div><div style="position:absolute;left:1223.8px;top:905px;width:1px;height:19px;background:#a0a0a0"></div><div style="position:absolute;left:1230.5px;top:69.5px;width:366px;height:852px;background:#f9f9f9;border:1px solid #e3e3e3;box-sizing:border-box"></div><div style="position:absolute;left:1297.5px;top:54.5px;width:280px;height:15.5px;background:#f0f0f0"></div><div style="position:absolute;left:1297.6px;top:54.5px;width:1px;height:15px;background:#e2e2e2"></div><div style="position:absolute;left:1408.5px;top:54.5px;width:1px;height:15px;background:#e2e2e2"></div><div style="position:absolute;left:1518px;top:54.5px;width:1px;height:15px;background:#e2e2e2"></div><div style="position:absolute;left:1230.5px;top:52.9px;width:67px;height:18.2px;background:#f9f9f9;border:1px solid #e3e3e3;border-bottom:none;box-sizing:border-box"></div><div style="position:absolute;left:1572.5px;top:54px;width:10.5px;height:14.5px;background:#f6f6f6;border-radius:2px"></div><div style="position:absolute;left:1584.5px;top:53px;width:13px;height:17px;background:#fdfdfd;border:1px solid #d0d0d0;border-radius:2px;box-sizing:border-box"></div><svg style="position:absolute;left:1560px;top:50px" width="40" height="24"><path d="M19.8 6.8 L14.8 11 L19.8 15.2 Z" fill="#a6a6a6"/><path d="M29 6.8 L34 11 L29 15.2 Z" fill="#111"/></svg><div style="position:absolute;left:1240.5px;top:80.3px;width:346.5px;height:830px;background:#fff;border:1px solid #8e949c;box-sizing:border-box"></div><div style="position:absolute;left:1333.3px;top:81.3px;width:1px;height:20.5px;background:#e6e6e6"></div><div style="position:absolute;left:1426px;top:81.3px;width:1px;height:20.5px;background:#e6e6e6"></div><div style="position:absolute;left:223px;top:443px;width:152px;height:55.5px;background:rgba(0,0,0,0.28);filter:blur(1.5px)"></div><div style="position:absolute;left:220.5px;top:440.5px;width:152px;height:55.3px;background:#f0f0f0"></div><div style="position:absolute;left:247px;top:468px;width:1.2px;height:27px;background:#f9f9f9"></div><div style="position:absolute;left:219.2px;top:440.3px;width:153px;height:27.5px;background:#91c9f7;border:3.8px solid #e8141c;box-sizing:border-box"></div>
<svg style="position:absolute;left:0;top:0" width="1600" height="954"><path d="M9.4 79.10000000000001 L13.4 83.10000000000001 L17.4 79.10000000000001" fill="none" stroke="#222" stroke-width="1.35"/><path d="M30.2 94.05000000000001 L34.1 97.65 L30.2 101.25" fill="none" stroke="#747474" stroke-width="1.4"/><path d="M30.2 109.80000000000001 L34.1 113.4 L30.2 117.0" fill="none" stroke="#747474" stroke-width="1.4"/><path d="M30.2 125.55000000000001 L34.1 129.15 L30.2 132.75" fill="none" stroke="#747474" stroke-width="1.4"/><path d="M30.2 141.3 L34.1 144.9 L30.2 148.5" fill="none" stroke="#747474" stroke-width="1.4"/><path d="M30.2 172.8 L34.1 176.4 L30.2 180.0" fill="none" stroke="#747474" stroke-width="1.4"/><path d="M30.2 188.55 L34.1 192.15 L30.2 195.75" fill="none" stroke="#747474" stroke-width="1.4"/><path d="M30.2 204.3 L34.1 207.9 L30.2 211.5" fill="none" stroke="#747474" stroke-width="1.4"/><path d="M30.2 220.05 L34.1 223.65 L30.2 227.25" fill="none" stroke="#747474" stroke-width="1.4"/><path d="M30.2 235.8 L34.1 239.4 L30.2 243.0" fill="none" stroke="#747474" stroke-width="1.4"/><path d="M30.2 298.79999999999995 L34.1 302.4 L30.2 306.0" fill="none" stroke="#747474" stroke-width="1.4"/><path d="M9.4 346.84999999999997 L13.4 350.84999999999997 L17.4 346.84999999999997" fill="none" stroke="#222" stroke-width="1.35"/><path d="M30.2 409.04999999999995 L34.1 412.65 L30.2 416.25" fill="none" stroke="#747474" stroke-width="1.4"/><path d="M30.2 424.79999999999995 L34.1 428.4 L30.2 432.0" fill="none" stroke="#747474" stroke-width="1.4"/><path d="M30.2 440.54999999999995 L34.1 444.15 L30.2 447.75" fill="none" stroke="#747474" stroke-width="1.4"/><path d="M30.2 456.29999999999995 L34.1 459.9 L30.2 463.5" fill="none" stroke="#747474" stroke-width="1.4"/><path d="M30.2 472.04999999999995 L34.1 475.65 L30.2 479.25" fill="none" stroke="#747474" stroke-width="1.4"/><path d="M11.6 516.6 L15.5 520.2 L11.6 523.8000000000001" fill="none" stroke="#747474" stroke-width="1.4"/><path d="M11.6 532.32 L15.5 535.9200000000001 L11.6 539.5200000000001" fill="none" stroke="#747474" stroke-width="1.4"/><path d="M11.6 548.0400000000001 L15.5 551.6400000000001 L11.6 555.2400000000001" fill="none" stroke="#747474" stroke-width="1.4"/><path d="M11.6 563.76 L15.5 567.36 L11.6 570.96" fill="none" stroke="#747474" stroke-width="1.4"/><path d="M11.6 579.48 L15.5 583.08 L11.6 586.6800000000001" fill="none" stroke="#747474" stroke-width="1.4"/><path d="M11.6 595.2 L15.5 598.8000000000001 L11.6 602.4000000000001" fill="none" stroke="#747474" stroke-width="1.4"/><path d="M11.6 610.9200000000001 L15.5 614.5200000000001 L11.6 618.1200000000001" fill="none" stroke="#747474" stroke-width="1.4"/><path d="M11.6 626.64 L15.5 630.24 L11.6 633.84" fill="none" stroke="#747474" stroke-width="1.4"/><path d="M11.6 642.36 L15.5 645.96 L11.6 649.5600000000001" fill="none" stroke="#747474" stroke-width="1.4"/><path d="M11.6 658.08 L15.5 661.6800000000001 L11.6 665.2800000000001" fill="none" stroke="#747474" stroke-width="1.4"/><path d="M11.6 673.8000000000001 L15.5 677.4000000000001 L11.6 681.0000000000001" fill="none" stroke="#747474" stroke-width="1.4"/><path d="M11.6 689.5200000000001 L15.5 693.1200000000001 L11.6 696.7200000000001" fill="none" stroke="#747474" stroke-width="1.4"/><path d="M11.6 705.24 L15.5 708.84 L11.6 712.44" fill="none" stroke="#747474" stroke-width="1.4"/><path d="M11.6 720.96 L15.5 724.5600000000001 L11.6 728.1600000000001" fill="none" stroke="#747474" stroke-width="1.4"/><path d="M11.6 736.6800000000001 L15.5 740.2800000000001 L11.6 743.8800000000001" fill="none" stroke="#747474" stroke-width="1.4"/><path d="M11.6 752.4 L15.5 756.0 L11.6 759.6" fill="none" stroke="#747474" stroke-width="1.4"/><path d="M11.6 768.12 L15.5 771.72 L11.6 775.32" fill="none" stroke="#747474" stroke-width="1.4"/><path d="M11.6 783.84 L15.5 787.44 L11.6 791.0400000000001" fill="none" stroke="#747474" stroke-width="1.4"/><path d="M11.6 799.5600000000001 L15.5 803.1600000000001 L11.6 806.7600000000001" fill="none" stroke="#747474" stroke-width="1.4"/><path d="M11.6 815.2800000000001 L15.5 818.8800000000001 L11.6 822.4800000000001" fill="none" stroke="#747474" stroke-width="1.4"/><path d="M11.6 831.0000000000001 L15.5 834.6000000000001 L11.6 838.2000000000002" fill="none" stroke="#747474" stroke-width="1.4"/><path d="M11.6 846.72 L15.5 850.32 L11.6 853.9200000000001" fill="none" stroke="#747474" stroke-width="1.4"/><path d="M11.6 862.44 L15.5 866.0400000000001 L11.6 869.6400000000001" fill="none" stroke="#747474" stroke-width="1.4"/><path d="M11.6 878.16 L15.5 881.76 L11.6 885.36" fill="none" stroke="#747474" stroke-width="1.4"/><path d="M11.6 893.88 L15.5 897.48 L11.6 901.08" fill="none" stroke="#747474" stroke-width="1.4"/><path d="M1246.0 107.0 L1250.0 111.0 L1254.0 107.0" fill="none" stroke="#222" stroke-width="1.35"/><path d="M1264.8 122.75000000000001 L1268.8 126.75000000000001 L1272.8 122.75000000000001" fill="none" stroke="#222" stroke-width="1.35"/><path d="M1283.6 154.25000000000003 L1287.6 158.25000000000003 L1291.6 154.25000000000003" fill="none" stroke="#222" stroke-width="1.35"/><path d="M1264.8 248.75000000000003 L1268.8 252.75000000000003 L1272.8 248.75000000000003" fill="none" stroke="#222" stroke-width="1.35"/><path d="M1283.6 280.25 L1287.6 284.25 L1291.6 280.25" fill="none" stroke="#222" stroke-width="1.35"/><path d="M1302.4 374.75 L1306.4 378.75 L1310.4 374.75" fill="none" stroke="#222" stroke-width="1.35"/><path d="M1321.2 390.5 L1325.2 394.5 L1329.2 390.5" fill="none" stroke="#222" stroke-width="1.35"/><path d="M1264.8 437.75 L1268.8 441.75 L1272.8 437.75" fill="none" stroke="#222" stroke-width="1.35"/><path d="M1283.6 469.25 L1287.6 473.25 L1291.6 469.25" fill="none" stroke="#222" stroke-width="1.35"/><path d="M1302.4 563.7499999999999 L1306.4 567.7499999999999 L1310.4 563.7499999999999" fill="none" stroke="#222" stroke-width="1.35"/><path d="M1321.2 579.4999999999999 L1325.2 583.4999999999999 L1329.2 579.4999999999999" fill="none" stroke="#222" stroke-width="1.35"/></svg>
<div class="t" style="left:23.00px;top:3.74px;font-size:12px;color:#000;transform:scaleX(0.885);">ScenarioRunner (v1.6.0)</div><div class="t" style="left:2.50px;top:28.14px;font-size:12px;color:#000;transform:scaleX(0.906);">File</div><div class="t" style="left:33.80px;top:28.14px;font-size:12px;color:#000;transform:scaleX(0.906);">Find</div><div class="t" style="left:70.00px;top:28.14px;font-size:12px;color:#000;transform:scaleX(0.906);">Edit</div><div class="t" style="left:103.60px;top:28.14px;font-size:12px;color:#000;transform:scaleX(0.911);">Tools</div><div class="t" style="left:143.50px;top:28.14px;font-size:12px;color:#000;transform:scaleX(0.898);">Run</div><div class="t" style="left:8.70px;top:58.14px;font-size:12px;color:#000;transform:scaleX(0.927);">Data View</div><div class="t" style="left:25.60px;top:76.24px;font-size:12px;color:#000;transform:scaleX(0.883);">MGeo</div><div class="t" style="left:43.60px;top:91.99px;font-size:12px;color:#000;transform:scaleX(0.835);">NODE</div><div class="t" style="left:43.60px;top:107.74px;font-size:12px;color:#000;transform:scaleX(0.835);">LINK</div><div class="t" style="left:43.60px;top:123.49px;font-size:12px;color:#000;transform:scaleX(0.835);">LANE_NODE</div><div class="t" style="left:43.60px;top:139.24px;font-size:12px;color:#000;transform:scaleX(0.835);">LANE_BOUNDARY</div><div class="t" style="left:43.60px;top:154.99px;font-size:12px;color:#000;transform:scaleX(0.835);">TRAFFIC_SIGN</div><div class="t" style="left:43.60px;top:170.74px;font-size:12px;color:#000;transform:scaleX(0.835);">TRAFFIC_LIGHT</div><div class="t" style="left:43.60px;top:186.49px;font-size:12px;color:#000;transform:scaleX(0.835);">SYNCED_TRAFFIC_LIGHT</div><div class="t" style="left:43.60px;top:202.24px;font-size:12px;color:#000;transform:scaleX(0.835);">INTERSECTION_CONTROLLER</div><div class="t" style="left:43.60px;top:217.99px;font-size:12px;color:#000;transform:scaleX(0.835);">SINGLECROSSWALK</div><div class="t" style="left:43.60px;top:233.74px;font-size:12px;color:#000;transform:scaleX(0.835);">CROSSWALK</div><div class="t" style="left:43.60px;top:249.49px;font-size:12px;color:#000;transform:scaleX(0.835);">ROAD</div><div class="t" style="left:43.60px;top:265.24px;font-size:12px;color:#000;transform:scaleX(0.835);">JUNCTION</div><div class="t" style="left:43.60px;top:280.99px;font-size:12px;color:#000;transform:scaleX(0.835);">SURFACE_MARKING</div><div class="t" style="left:43.60px;top:296.74px;font-size:12px;color:#000;transform:scaleX(0.835);">ROADPOLYGON</div><div class="t" style="left:43.60px;top:312.49px;font-size:12px;color:#000;transform:scaleX(0.835);">PARKING_SPACE</div><div class="t" style="left:43.60px;top:328.24px;font-size:12px;color:#000;transform:scaleX(0.835);">OBJECT</div><div class="t" style="left:25.60px;top:343.99px;font-size:12px;color:#000;transform:scaleX(0.884);">OpenSCENARIO - Scenario_Cut_In_1</div><div class="t" style="left:43.60px;top:359.74px;font-size:12px;color:#000;transform:scaleX(0.911);">FileHeader</div><div class="t" style="left:43.60px;top:375.49px;font-size:12px;color:#000;transform:scaleX(0.918);">CatalogLocations</div><div class="t" style="left:43.60px;top:391.24px;font-size:12px;color:#000;transform:scaleX(0.921);">ParameterDeclarations</div><div class="t" style="left:43.60px;top:406.99px;font-size:12px;color:#000;transform:scaleX(0.913);">RoadNetwork</div><div class="t" style="left:43.60px;top:422.74px;font-size:12px;color:#000;transform:scaleX(0.915);">SimulatorInfo</div><div class="t" style="left:43.60px;top:438.49px;font-size:12px;color:#000;transform:scaleX(0.918);">Entities</div><div class="t" style="left:43.60px;top:454.24px;font-size:12px;color:#000;transform:scaleX(0.921);">Storyboard</div><div class="t" style="left:43.60px;top:469.99px;font-size:12px;color:#000;transform:scaleX(0.921);">Evaluation</div><div class="t" style="left:8.50px;top:495.54px;font-size:12px;color:#000;transform:scaleX(0.930);">Properties</div><div class="t" style="left:101.00px;top:495.54px;font-size:12px;color:#000;transform:scaleX(0.930);">Value</div><div class="t" style="left:26.30px;top:514.54px;font-size:12px;color:#000;transform:scaleX(0.835);">NODE</div><div class="t" style="left:26.30px;top:530.26px;font-size:12px;color:#000;transform:scaleX(0.835);">LINK</div><div class="t" style="left:26.30px;top:545.98px;font-size:12px;color:#000;transform:scaleX(0.835);">LANE_NODE</div><div class="t" style="left:26.30px;top:561.70px;font-size:12px;color:#000;transform:scaleX(0.835);">LANE_BOU...</div><div class="t" style="left:26.30px;top:577.42px;font-size:12px;color:#000;transform:scaleX(0.835);">TRAFFIC_SI...</div><div class="t" style="left:26.30px;top:593.14px;font-size:12px;color:#000;transform:scaleX(0.835);">TRAFFIC_LI...</div><div class="t" style="left:26.30px;top:608.86px;font-size:12px;color:#000;transform:scaleX(0.835);">PEDESTRIA...</div><div class="t" style="left:26.30px;top:624.58px;font-size:12px;color:#000;transform:scaleX(0.835);">SYNCED_TR...</div><div class="t" style="left:26.30px;top:640.30px;font-size:12px;color:#000;transform:scaleX(0.835);">INTERSECTI...</div><div class="t" style="left:26.30px;top:656.02px;font-size:12px;color:#000;transform:scaleX(0.835);">JUNCTION</div><div class="t" style="left:26.30px;top:671.74px;font-size:12px;color:#000;transform:scaleX(0.835);">ROAD</div><div class="t" style="left:26.30px;top:687.46px;font-size:12px;color:#000;transform:scaleX(0.909);">MScenario</div><div class="t" style="left:26.30px;top:703.18px;font-size:12px;color:#000;transform:scaleX(0.871);">OpenSCEN...</div><div class="t" style="left:26.30px;top:718.90px;font-size:12px;color:#000;transform:scaleX(0.835);">CROSSWALK</div><div class="t" style="left:26.30px;top:734.62px;font-size:12px;color:#000;transform:scaleX(0.835);">SINGLECRO...</div><div class="t" style="left:26.30px;top:750.34px;font-size:12px;color:#000;transform:scaleX(0.835);">ROADPOLY...</div><div class="t" style="left:26.30px;top:766.06px;font-size:12px;color:#000;transform:scaleX(0.835);">PARKING_S...</div><div class="t" style="left:26.30px;top:781.78px;font-size:12px;color:#000;transform:scaleX(0.835);">SURFACE_...</div><div class="t" style="left:26.30px;top:797.50px;font-size:12px;color:#000;transform:scaleX(0.835);">OBJECT</div><div class="t" style="left:26.30px;top:813.22px;font-size:12px;color:#000;transform:scaleX(0.835);">SELECT</div><div class="t" style="left:26.30px;top:828.94px;font-size:12px;color:#000;transform:scaleX(0.835);">HIGHLIGHT1</div><div class="t" style="left:26.30px;top:844.66px;font-size:12px;color:#000;transform:scaleX(0.835);">HIGHLIGHT2</div><div class="t" style="left:26.30px;top:860.38px;font-size:12px;color:#000;transform:scaleX(0.835);">HIGHLIGHT3</div><div class="t" style="left:26.30px;top:876.10px;font-size:12px;color:#000;transform:scaleX(0.835);">ERROR</div><div class="t" style="left:26.30px;top:891.82px;font-size:12px;color:#000;transform:scaleX(0.835);">MAX ID DI...</div><div class="t" style="left:23.00px;top:929.07px;font-size:13.5px;color:#262626;transform:scaleX(0.876);">[INFO] OpenSCENARIO is successfully loaded</div><div class="t" style="left:250.40px;top:56.07px;font-size:13.5px;color:#333;transform:scaleX(0.791);">NODE</div><div class="t" style="left:342.13px;top:56.07px;font-size:13.5px;color:#262626;transform:scaleX(0.853);">See East</div><div class="t" style="left:478.07px;top:56.07px;font-size:13.5px;color:#262626;transform:scaleX(0.853);">See North</div><div class="t" style="left:617.63px;top:56.07px;font-size:13.5px;color:#262626;transform:scaleX(0.853);">See West</div><div class="t" style="left:754.10px;top:56.07px;font-size:13.5px;color:#262626;transform:scaleX(0.853);">See South</div><div class="t" style="left:855.00px;top:56.07px;font-size:13.5px;color:#333;transform:scaleX(0.865);">Camera Speed</div><div class="t" style="left:1111.16px;top:55.07px;font-size:13.5px;color:#262626;transform:scaleX(0.889);">0</div><div class="t" style="left:1175.95px;top:55.77px;font-size:13.5px;color:#262626;transform:scaleX(0.853);">Reset</div><div class="t" style="left:255.40px;top:800.57px;font-size:13.5px;color:#333;transform:scaleX(0.868);">Ground Level View</div><div class="t" style="left:279.00px;top:853.77px;font-size:13.5px;color:#333;transform:scaleX(0.902);">S&lt;-W&lt;-N</div><div class="t" style="left:730.40px;top:799.67px;font-size:13.5px;color:#333;transform:scaleX(0.885);">Bird Eye View</div><div class="t" style="left:868.66px;top:799.67px;font-size:13.5px;color:#262626;transform:scaleX(0.889);">0</div><div class="t" style="left:932.95px;top:800.67px;font-size:13.5px;color:#333;transform:scaleX(0.853);">Reset</div><div class="t" style="left:743.20px;top:853.07px;font-size:13.5px;color:#333;transform:scaleX(0.924);">N-&gt;E-&gt;S</div><div class="t" style="left:868.66px;top:852.37px;font-size:13.5px;color:#262626;transform:scaleX(0.889);">0</div><div class="t" style="left:932.95px;top:853.67px;font-size:13.5px;color:#333;transform:scaleX(0.853);">Reset</div><div class="t" style="left:1025.70px;top:776.07px;font-size:13.5px;color:#333;transform:scaleX(0.853);">East</div><div class="t" style="left:1095.00px;top:776.77px;font-size:13.5px;color:#262626;transform:scaleX(0.844);">550</div><div class="t" style="left:1023.00px;top:804.07px;font-size:13.5px;color:#333;transform:scaleX(0.853);">North</div><div class="t" style="left:1095.00px;top:804.77px;font-size:13.5px;color:#262626;transform:scaleX(0.844);">42</div><div class="t" style="left:994.30px;top:831.77px;font-size:13.5px;color:#333;transform:scaleX(0.876);">Up(Zoom Level)</div><div class="t" style="left:1095.00px;top:832.47px;font-size:13.5px;color:#262626;transform:scaleX(0.844);">-210</div><div class="t" style="left:1078.99px;top:869.57px;font-size:13.5px;color:#333;transform:scaleX(0.868);">Reset View</div><div class="t" style="left:930.00px;top:906.07px;font-size:13.5px;color:#333;transform:scaleX(0.859);">range x = [425, 675]</div><div class="t" style="left:1056.00px;top:906.07px;font-size:13.5px;color:#333;transform:scaleX(0.883);">range y = [-45, 128]</div><div class="t" style="left:1182.60px;top:906.07px;font-size:13.5px;color:#333;transform:scaleX(0.838);">-210.0</div><div class="t" style="left:1241.40px;top:54.74px;font-size:12px;color:#222;transform:scaleX(0.946);">Property</div><div class="t" style="left:1307.00px;top:55.54px;font-size:12px;color:#222;transform:scaleX(0.966);">Simulation Status</div><div class="t" style="left:1420.00px;top:55.54px;font-size:12px;color:#222;transform:scaleX(0.976);">Batch Simulation</div><div class="t" style="left:1530.40px;top:55.54px;font-size:12px;color:#222;transform:scaleX(0.950);">Simulati</div><div class="t" style="left:1245.40px;top:85.54px;font-size:12px;color:#000;transform:scaleX(0.930);">Properties</div><div class="t" style="left:1337.60px;top:85.54px;font-size:12px;color:#000;transform:scaleX(0.930);">Type</div><div class="t" style="left:1430.00px;top:85.54px;font-size:12px;color:#000;transform:scaleX(0.930);">Value</div><div class="t" style="left:1263.50px;top:104.14px;font-size:12px;color:#000;transform:scaleX(0.918);">Entities</div><div class="t" style="left:1282.30px;top:119.89px;font-size:12px;color:#000;transform:scaleX(0.916);">Scenari...</div><div class="t" style="left:1300.00px;top:135.64px;font-size:12px;color:#000;transform:scaleX(0.930);">name</div><div class="t" style="left:1337.30px;top:135.64px;font-size:12px;color:#000;transform:scaleX(0.930);">string</div><div class="t" style="left:1429.80px;top:135.64px;font-size:12px;color:#000;transform:scaleX(0.898);">Ego</div><div class="t" style="left:1301.10px;top:151.39px;font-size:12px;color:#000;transform:scaleX(0.906);">Vehi...</div><div class="t" style="left:1319.00px;top:167.14px;font-size:12px;color:#000;transform:scaleX(0.930);">...</div><div class="t" style="left:1337.30px;top:167.14px;font-size:12px;color:#000;transform:scaleX(0.930);">string</div><div class="t" style="left:1429.80px;top:167.14px;font-size:12px;color:#000;transform:scaleX(0.914);">2016_Hyundai_Ioniq</div><div class="t" style="left:1319.00px;top:182.89px;font-size:12px;color:#000;transform:scaleX(0.930);">...</div><div class="t" style="left:1337.30px;top:182.89px;font-size:12px;color:#000;transform:scaleX(0.930);">double</div><div class="t" style="left:1319.00px;top:198.64px;font-size:12px;color:#000;transform:scaleX(0.930);">...</div><div class="t" style="left:1337.30px;top:198.64px;font-size:12px;color:#000;transform:scaleX(0.930);">string</div><div class="t" style="left:1319.00px;top:214.39px;font-size:12px;color:#000;transform:scaleX(0.930);">...</div><div class="t" style="left:1337.30px;top:214.39px;font-size:12px;color:#000;transform:scaleX(0.917);">VehicleCategory</div><div class="t" style="left:1429.80px;top:214.39px;font-size:12px;color:#000;transform:scaleX(0.930);">car</div><div class="t" style="left:1319.00px;top:230.14px;font-size:12px;color:#000;transform:scaleX(0.930);">r...</div><div class="t" style="left:1337.30px;top:230.14px;font-size:12px;color:#000;transform:scaleX(0.906);">Role</div><div class="t" style="left:1282.30px;top:245.89px;font-size:12px;color:#000;transform:scaleX(0.916);">Scenari...</div><div class="t" style="left:1300.00px;top:261.64px;font-size:12px;color:#000;transform:scaleX(0.930);">name</div><div class="t" style="left:1337.30px;top:261.64px;font-size:12px;color:#000;transform:scaleX(0.930);">string</div><div class="t" style="left:1429.80px;top:261.64px;font-size:12px;color:#000;transform:scaleX(0.835);">NPC_1</div><div class="t" style="left:1301.10px;top:277.39px;font-size:12px;color:#000;transform:scaleX(0.906);">Vehi...</div><div class="t" style="left:1319.00px;top:293.14px;font-size:12px;color:#000;transform:scaleX(0.930);">...</div><div class="t" style="left:1337.30px;top:293.14px;font-size:12px;color:#000;transform:scaleX(0.930);">string</div><div class="t" style="left:1429.80px;top:293.14px;font-size:12px;color:#000;transform:scaleX(0.914);">2016_Hyundai_Ioniq</div><div class="t" style="left:1319.00px;top:308.89px;font-size:12px;color:#000;transform:scaleX(0.930);">...</div><div class="t" style="left:1337.30px;top:308.89px;font-size:12px;color:#000;transform:scaleX(0.930);">double</div><div class="t" style="left:1319.00px;top:324.64px;font-size:12px;color:#000;transform:scaleX(0.930);">...</div><div class="t" style="left:1337.30px;top:324.64px;font-size:12px;color:#000;transform:scaleX(0.930);">string</div><div class="t" style="left:1319.00px;top:340.39px;font-size:12px;color:#000;transform:scaleX(0.930);">...</div><div class="t" style="left:1337.30px;top:340.39px;font-size:12px;color:#000;transform:scaleX(0.917);">VehicleCategory</div><div class="t" style="left:1429.80px;top:340.39px;font-size:12px;color:#000;transform:scaleX(0.930);">car</div><div class="t" style="left:1319.00px;top:356.14px;font-size:12px;color:#000;transform:scaleX(0.930);">r...</div><div class="t" style="left:1337.30px;top:356.14px;font-size:12px;color:#000;transform:scaleX(0.906);">Role</div><div class="t" style="left:1318.40px;top:371.89px;font-size:12px;color:#9a9a9a;transform:scaleX(0.930);">...</div><div class="t" style="left:1337.30px;top:403.39px;font-size:12px;color:#000;transform:scaleX(0.930);">string</div><div class="t" style="left:1429.80px;top:403.39px;font-size:12px;color:#000;transform:scaleX(0.930);">check_tl</div><div class="t" style="left:1337.30px;top:419.14px;font-size:12px;color:#000;transform:scaleX(0.930);">string</div><div class="t" style="left:1429.80px;top:419.14px;font-size:12px;color:#000;transform:scaleX(0.930);">false</div><div class="t" style="left:1282.30px;top:434.89px;font-size:12px;color:#000;transform:scaleX(0.916);">Scenari...</div><div class="t" style="left:1300.00px;top:450.64px;font-size:12px;color:#000;transform:scaleX(0.930);">name</div><div class="t" style="left:1337.30px;top:450.64px;font-size:12px;color:#000;transform:scaleX(0.930);">string</div><div class="t" style="left:1429.80px;top:450.64px;font-size:12px;color:#000;transform:scaleX(0.835);">NPC_2</div><div class="t" style="left:1301.10px;top:466.39px;font-size:12px;color:#000;transform:scaleX(0.906);">Vehi...</div><div class="t" style="left:1319.00px;top:482.14px;font-size:12px;color:#000;transform:scaleX(0.930);">...</div><div class="t" style="left:1337.30px;top:482.14px;font-size:12px;color:#000;transform:scaleX(0.930);">string</div><div class="t" style="left:1429.80px;top:482.14px;font-size:12px;color:#000;transform:scaleX(0.914);">2016_Hyundai_Ioniq</div><div class="t" style="left:1319.00px;top:497.89px;font-size:12px;color:#000;transform:scaleX(0.930);">...</div><div class="t" style="left:1337.30px;top:497.89px;font-size:12px;color:#000;transform:scaleX(0.930);">double</div><div class="t" style="left:1319.00px;top:513.64px;font-size:12px;color:#000;transform:scaleX(0.930);">...</div><div class="t" style="left:1337.30px;top:513.64px;font-size:12px;color:#000;transform:scaleX(0.930);">string</div><div class="t" style="left:1319.00px;top:529.39px;font-size:12px;color:#000;transform:scaleX(0.930);">...</div><div class="t" style="left:1337.30px;top:529.39px;font-size:12px;color:#000;transform:scaleX(0.917);">VehicleCategory</div><div class="t" style="left:1429.80px;top:529.39px;font-size:12px;color:#000;transform:scaleX(0.930);">car</div><div class="t" style="left:1319.00px;top:545.14px;font-size:12px;color:#000;transform:scaleX(0.930);">r...</div><div class="t" style="left:1337.30px;top:545.14px;font-size:12px;color:#000;transform:scaleX(0.906);">Role</div><div class="t" style="left:1318.40px;top:560.89px;font-size:12px;color:#9a9a9a;transform:scaleX(0.930);">...</div><div class="t" style="left:1337.30px;top:592.39px;font-size:12px;color:#000;transform:scaleX(0.930);">string</div><div class="t" style="left:1429.80px;top:592.39px;font-size:12px;color:#000;transform:scaleX(0.930);">check_tl</div><div class="t" style="left:1337.30px;top:608.14px;font-size:12px;color:#000;transform:scaleX(0.930);">string</div><div class="t" style="left:1429.80px;top:608.14px;font-size:12px;color:#000;transform:scaleX(0.930);">false</div><div class="t" style="left:252.00px;top:449.54px;font-size:12px;color:#111;transform:scaleX(0.936);">Add Entity Wizard</div><div class="t" style="left:252.00px;top:478.14px;font-size:12px;color:#111;transform:scaleX(0.932);">Add EntitySelection</div>
</body></html>
